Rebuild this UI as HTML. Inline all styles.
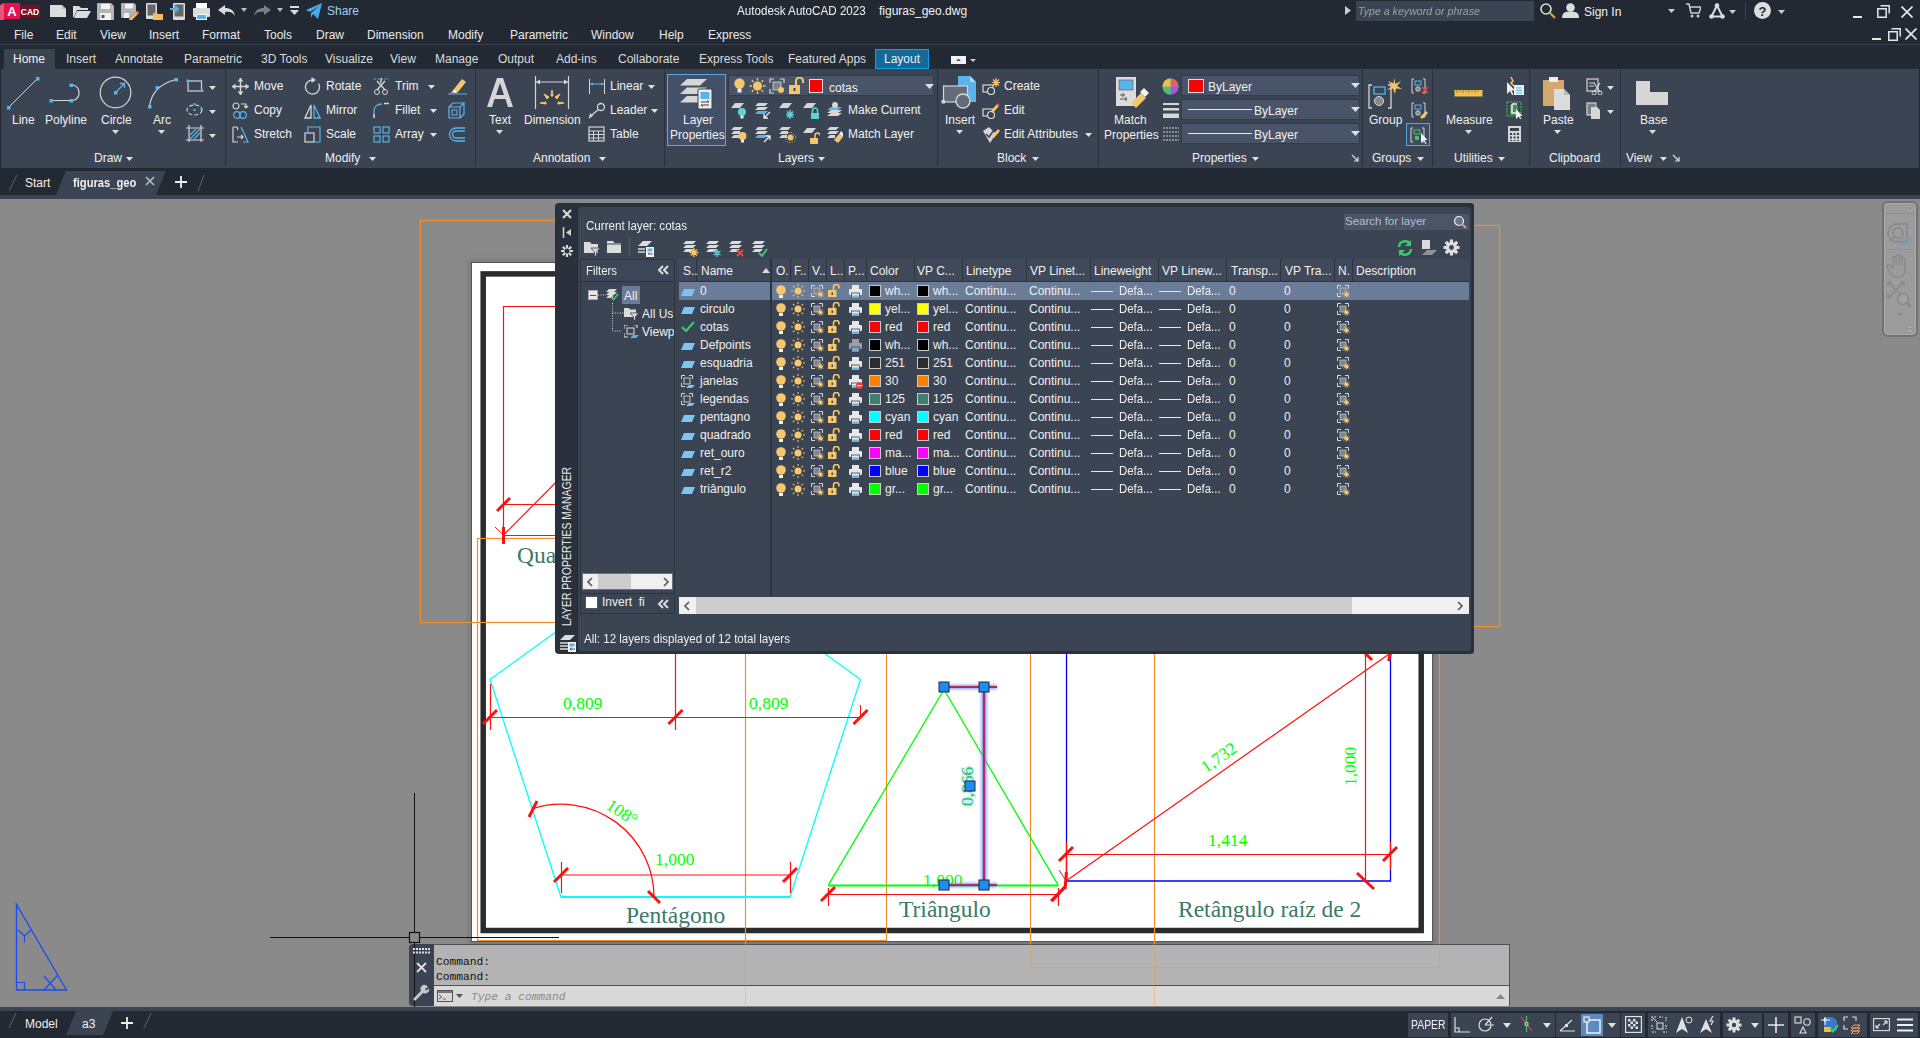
<!DOCTYPE html><html><head><meta charset="utf-8"><style>
*{margin:0;padding:0;box-sizing:border-box}
html,body{width:1920px;height:1038px;overflow:hidden;background:#222933;font-family:"Liberation Sans",sans-serif}
.t{position:absolute;white-space:nowrap;line-height:1;}
.r{position:absolute;}
</style></head><body>
<div class="r" style="left:0px;top:0px;width:1920px;height:44px;background:#222933;"></div>
<div class="r" style="left:0px;top:44px;width:1920px;height:1px;background:#3a4250;"></div>
<div class="r" style="left:0px;top:45px;width:1920px;height:24px;background:#222933;"></div>
<div class="r" style="left:1px;top:69px;width:1918px;height:99px;background:#3b4453;"></div>
<div class="r" style="left:0px;top:168px;width:1920px;height:27px;background:#222933;"></div>
<div class="r" style="left:0px;top:195px;width:1920px;height:4px;background:#3b4453;"></div>
<div class="r" style="left:0px;top:199px;width:1920px;height:808px;background:#8a8a8a;"></div>
<div class="r" style="left:0px;top:1007px;width:1920px;height:4px;background:#3b4453;"></div>
<div class="r" style="left:0px;top:1011px;width:1920px;height:27px;background:#222933;"></div>
<svg class="r" style="left:0px;top:3px;" width="40" height="18" viewBox="0 0 40 18"><polygon points="0,2 4,0 4,17 0,17" fill="#e8557a"/><rect x="4" y="0" width="16" height="16" fill="#e5124f"/><rect x="20" y="2" width="20" height="12" fill="#7b0b26"/><text x="12" y="13" font-family="Liberation Sans" font-weight="bold" font-size="13" fill="#fff" text-anchor="middle">A</text><text x="30" y="12" font-family="Liberation Sans" font-weight="bold" font-size="8.5" fill="#fff" text-anchor="middle">CAD</text></svg>
<svg class="r" style="left:50px;top:5px;" width="17" height="13" viewBox="0 0 17 13"><path d="M0,0 H12 L16,4 V12 H0 Z" fill="#dcdcdc"/><path d="M12,0 V4 H16" fill="#bbb"/></svg>
<svg class="r" style="left:73px;top:5px;" width="18" height="13" viewBox="0 0 18 13"><path d="M0,1 H6 L8,3 H15 V5 H4 L1,12 H0Z" fill="#dcdcdc"/><path d="M4,6 H18 L14,13 H1 Z" fill="#dcdcdc"/></svg>
<svg class="r" style="left:97px;top:3px;" width="17" height="17" viewBox="0 0 17 17"><path d="M1,0 H14 L17,3 V16 Q17,17 16,17 H1 Q0,17 0,16 V1 Q0,0 1,0Z" fill="#b4b4b4"/><rect x="4" y="1" width="9" height="5" fill="#f2f2f2"/><rect x="3" y="10" width="11" height="7" fill="#f2f2f2"/><rect x="4.5" y="12" width="3" height="3" fill="#555"/></svg>
<svg class="r" style="left:121px;top:3px;" width="18" height="17" viewBox="0 0 18 17"><path d="M1,0 H13 L15,2 V9 L9,15 H1 Q0,15 0,14 V1 Q0,0 1,0Z" fill="#b4b4b4"/><rect x="4" y="1" width="8" height="4.5" fill="#f2f2f2"/><rect x="3" y="10" width="5" height="5" fill="#f2f2f2"/><path d="M8,16 L16,8 L18,10 L10,18 H8Z" fill="#f0c060"/><path d="M15.5,8.5 L17.5,10.5" stroke="#e55" stroke-width="2.2"/></svg>
<svg class="r" style="left:146px;top:3px;" width="17" height="17" viewBox="0 0 17 17"><rect x="0" y="0" width="11" height="16" rx="1" fill="#dcdcdc"/><rect x="1.5" y="1.5" width="8" height="11" fill="#666"/><path d="M7,10 H11 L12,11 H17 V17 H7Z" fill="#f0c060"/></svg>
<svg class="r" style="left:170px;top:3px;" width="15" height="17" viewBox="0 0 15 17"><rect x="3" y="0" width="12" height="17" rx="1" fill="#dcdcdc"/><rect x="4.5" y="1.5" width="9" height="12" fill="#666"/><path d="M0,6 H8 M5,3 L8,6 L5,9" stroke="#4fb0f0" stroke-width="2" fill="none"/></svg>
<svg class="r" style="left:193px;top:3px;" width="17" height="17" viewBox="0 0 17 17"><rect x="3" y="0" width="11" height="5" fill="#fff"/><rect x="0" y="5" width="17" height="9" rx="1" fill="#dcdcdc"/><rect x="3" y="11" width="11" height="6" fill="#fff"/><rect x="4" y="12" width="9" height="4" fill="#5ab0f0"/></svg>
<svg class="r" style="left:218px;top:5px;" width="18" height="12" viewBox="0 0 18 12"><path d="M7,0 L0,5 L7,10 V7 C11,6 15,7 17,11 C16,5 12,3 7,3Z" fill="#dcdcdc"/></svg>
<svg class="r" style="left:241px;top:8px;" width="6" height="4" viewBox="0 0 6 4"><path d="M0,0 H6 L3,4Z" fill="#bbb"/></svg>
<svg class="r" style="left:253px;top:5px;" width="18" height="12" viewBox="0 0 18 12"><path d="M11,0 L18,5 L11,10 V7 C7,6 3,7 1,11 C2,5 6,3 11,3Z" fill="#777f8a"/></svg>
<svg class="r" style="left:277px;top:8px;" width="6" height="4" viewBox="0 0 6 4"><path d="M0,0 H6 L3,4Z" fill="#bbb"/></svg>
<svg class="r" style="left:290px;top:6px;" width="9" height="9" viewBox="0 0 9 9"><rect x="0" y="0" width="9" height="2" fill="#ddd"/><path d="M0,4 H9 L4.5,9Z" fill="#ddd"/></svg>
<svg class="r" style="left:306px;top:3px;" width="16" height="16" viewBox="0 0 16 16"><path d="M0,7 L16,0 L12,16 L7,11 L5,15 L5,10 L13,3 L4,9Z" fill="#4aa8e8"/></svg>
<div class="t" style="left:327px;top:5.14px;font-size:12px;color:#9fd2f8;">Share</div>
<div class="t" style="left:737px;top:5.34px;font-size:12px;color:#f2f2f2;transform:scaleX(0.97);transform-origin:0 0">Autodesk AutoCAD 2023</div>
<div class="t" style="left:879px;top:5.34px;font-size:12px;color:#f2f2f2;">figuras_geo.dwg</div>
<svg class="r" style="left:1345px;top:6px;" width="6" height="9" viewBox="0 0 6 9"><path d="M0,0 L6,4.5 L0,9Z" fill="#ccc"/></svg>
<div class="r" style="left:1356px;top:1px;width:178px;height:20px;background:#3b4453;"></div>
<div class="t" style="left:1358px;top:5.69px;font-size:11px;color:#9aa1ab;font-style:italic;transform:scaleX(0.965);transform-origin:0 0">Type a keyword or phrase</div>
<svg class="r" style="left:1540px;top:3px;" width="16" height="16" viewBox="0 0 16 16"><circle cx="6" cy="6" r="5" stroke="#ddd" stroke-width="1.6" fill="none"/><path d="M10,10 L15,15" stroke="#d8a050" stroke-width="2.2"/></svg>
<svg class="r" style="left:1562px;top:3px;" width="17" height="15" viewBox="0 0 17 15"><circle cx="8.5" cy="4.5" r="4.3" fill="#ddd"/><path d="M0,15 C0,9 4,8.5 8.5,8.5 C13,8.5 17,9 17,15Z" fill="#ddd"/></svg>
<div class="t" style="left:1584px;top:6.14px;font-size:12px;color:#f0f0f0;">Sign In</div>
<svg class="r" style="left:1668px;top:9px;" width="7" height="4" viewBox="0 0 7 4"><path d="M0,0 H7 L3.5,4Z" fill="#ccc"/></svg>
<svg class="r" style="left:1686px;top:3px;" width="15" height="15" viewBox="0 0 15 15"><path d="M0,1 H3 L5,10 H13 L15,4 H4" stroke="#ccc" stroke-width="1.5" fill="none"/><circle cx="6" cy="13" r="1.5" fill="#ccc"/><circle cx="12" cy="13" r="1.5" fill="#ccc"/></svg>
<svg class="r" style="left:1709px;top:3px;" width="16" height="16" viewBox="0 0 16 16"><path d="M8,2.5 L2.5,13.5 H13.5 Z" stroke="#ddd" stroke-width="2" fill="none"/><circle cx="8" cy="2.5" r="2.3" fill="#ddd"/><circle cx="2.5" cy="13.5" r="2.3" fill="#ddd"/><circle cx="13.5" cy="13.5" r="2.3" fill="#ddd"/></svg>
<svg class="r" style="left:1729px;top:10px;" width="7" height="4" viewBox="0 0 7 4"><path d="M0,0 H7 L3.5,4Z" fill="#ccc"/></svg>
<div class="r" style="left:1745px;top:2px;width:1px;height:18px;background:#3b4453;"></div>
<svg class="r" style="left:1754px;top:2px;" width="17" height="17" viewBox="0 0 17 17"><circle cx="8.5" cy="8.5" r="8.5" fill="#ddd"/><text x="8.5" y="13.5" font-family="Liberation Sans" font-weight="bold" font-size="13" fill="#222933" text-anchor="middle">?</text></svg>
<svg class="r" style="left:1778px;top:10px;" width="7" height="4" viewBox="0 0 7 4"><path d="M0,0 H7 L3.5,4Z" fill="#ccc"/></svg>
<div class="r" style="left:1853px;top:16px;width:9px;height:2px;background:#e6e6e6;"></div>
<svg class="r" style="left:1877px;top:5px;" width="13" height="13" viewBox="0 0 13 13"><path d="M3.5,0.8 H12.2 V8.5 M0.8,3.8 H9.2 V12.2 H0.8 Z" stroke="#e6e6e6" stroke-width="1.5" fill="none"/></svg>
<svg class="r" style="left:1901px;top:6px;" width="12" height="12" viewBox="0 0 12 12"><path d="M0.5,0.5 L11.5,11.5 M11.5,0.5 L0.5,11.5" stroke="#e6e6e6" stroke-width="1.7"/></svg>
<div class="t" style="left:14px;top:28.84px;font-size:12px;color:#e8e8e8;">File</div>
<div class="t" style="left:56px;top:28.84px;font-size:12px;color:#e8e8e8;">Edit</div>
<div class="t" style="left:100px;top:28.84px;font-size:12px;color:#e8e8e8;">View</div>
<div class="t" style="left:149px;top:28.84px;font-size:12px;color:#e8e8e8;">Insert</div>
<div class="t" style="left:202px;top:28.84px;font-size:12px;color:#e8e8e8;">Format</div>
<div class="t" style="left:264px;top:28.84px;font-size:12px;color:#e8e8e8;">Tools</div>
<div class="t" style="left:316px;top:28.84px;font-size:12px;color:#e8e8e8;">Draw</div>
<div class="t" style="left:367px;top:28.84px;font-size:12px;color:#e8e8e8;">Dimension</div>
<div class="t" style="left:448px;top:28.84px;font-size:12px;color:#e8e8e8;">Modify</div>
<div class="t" style="left:510px;top:28.84px;font-size:12px;color:#e8e8e8;">Parametric</div>
<div class="t" style="left:591px;top:28.84px;font-size:12px;color:#e8e8e8;">Window</div>
<div class="t" style="left:659px;top:28.84px;font-size:12px;color:#e8e8e8;">Help</div>
<div class="t" style="left:708px;top:28.84px;font-size:12px;color:#e8e8e8;">Express</div>
<div class="r" style="left:1872px;top:38px;width:9px;height:2px;background:#e6e6e6;"></div>
<svg class="r" style="left:1888px;top:28px;" width="13" height="13" viewBox="0 0 13 13"><path d="M3.5,0.8 H12.2 V8.5 M0.8,3.8 H9.2 V12.2 H0.8 Z" stroke="#e6e6e6" stroke-width="1.5" fill="none"/></svg>
<svg class="r" style="left:1905px;top:28px;" width="12" height="12" viewBox="0 0 12 12"><path d="M0.5,0.5 L11.5,11.5 M11.5,0.5 L0.5,11.5" stroke="#e6e6e6" stroke-width="1.7"/></svg>
<div class="r" style="left:4px;top:49px;width:51px;height:20px;background:#3b4453;"></div>
<div class="r" style="left:875px;top:49px;width:54px;height:20px;background:#136a98;border:1px solid #14a0e6"></div>
<div class="t" style="left:13px;top:52.84px;font-size:12px;color:#f0f0f0;">Home</div>
<div class="t" style="left:66px;top:52.84px;font-size:12px;color:#dcdcdc;">Insert</div>
<div class="t" style="left:115px;top:52.84px;font-size:12px;color:#dcdcdc;">Annotate</div>
<div class="t" style="left:184px;top:52.84px;font-size:12px;color:#dcdcdc;">Parametric</div>
<div class="t" style="left:261px;top:52.84px;font-size:12px;color:#dcdcdc;">3D Tools</div>
<div class="t" style="left:325px;top:52.84px;font-size:12px;color:#dcdcdc;">Visualize</div>
<div class="t" style="left:390px;top:52.84px;font-size:12px;color:#dcdcdc;">View</div>
<div class="t" style="left:435px;top:52.84px;font-size:12px;color:#dcdcdc;">Manage</div>
<div class="t" style="left:498px;top:52.84px;font-size:12px;color:#dcdcdc;">Output</div>
<div class="t" style="left:556px;top:52.84px;font-size:12px;color:#dcdcdc;">Add-ins</div>
<div class="t" style="left:618px;top:52.84px;font-size:12px;color:#dcdcdc;">Collaborate</div>
<div class="t" style="left:699px;top:52.84px;font-size:12px;color:#dcdcdc;">Express Tools</div>
<div class="t" style="left:788px;top:52.84px;font-size:12px;color:#dcdcdc;">Featured Apps</div>
<div class="t" style="left:884px;top:52.84px;font-size:12px;color:#f0f0f0;">Layout</div>
<svg class="r" style="left:951px;top:55px;" width="25" height="10" viewBox="0 0 25 10"><rect x="0" y="1" width="15" height="8" fill="#f2f2f2"/><path d="M5,6 L7.5,3.5 L10,6Z" fill="#555"/><path d="M19,4 H25 L22,7Z" fill="#ccc"/></svg>
<div class="r" style="left:225px;top:70px;width:1px;height:97px;background:#2a313c;"></div>
<div class="r" style="left:475px;top:70px;width:1px;height:97px;background:#2a313c;"></div>
<div class="r" style="left:664px;top:70px;width:1px;height:97px;background:#2a313c;"></div>
<div class="r" style="left:937px;top:70px;width:1px;height:97px;background:#2a313c;"></div>
<div class="r" style="left:1098px;top:70px;width:1px;height:97px;background:#2a313c;"></div>
<div class="r" style="left:1362px;top:70px;width:1px;height:97px;background:#2a313c;"></div>
<div class="r" style="left:1432px;top:70px;width:1px;height:97px;background:#2a313c;"></div>
<div class="r" style="left:1529px;top:70px;width:1px;height:97px;background:#2a313c;"></div>
<div class="r" style="left:1620px;top:70px;width:1px;height:97px;background:#2a313c;"></div>
<svg class="r" style="left:6px;top:76px;" width="34" height="34" viewBox="0 0 34 34"><path d="M2.5,31.5 L31.5,2.5" stroke="#d6d6d6" stroke-width="1"/><rect x="1" y="30" width="3.5" height="3.5" fill="#5ab4ea"/><rect x="30" y="1" width="3.5" height="3.5" fill="#5ab4ea"/></svg>
<div class="t" style="left:12px;top:113.84px;font-size:12px;color:#f0f0f0;">Line</div>
<svg class="r" style="left:48px;top:83px;" width="36" height="20" viewBox="0 0 36 20"><path d="M4,17.5 H22" stroke="#d6d6d6"/><path d="M25,2 A8,8 0 0 1 25,17.5" stroke="#d6d6d6" fill="none" stroke-width="1.2"/><rect x="1.5" y="16" width="3.5" height="3.5" fill="#5ab4ea"/><rect x="21.5" y="16" width="3.5" height="3.5" fill="#5ab4ea"/><rect x="21.5" y="0.5" width="3.5" height="3.5" fill="#5ab4ea"/></svg>
<div class="t" style="left:45px;top:113.84px;font-size:12px;color:#f0f0f0;">Polyline</div>
<svg class="r" style="left:99px;top:76px;" width="33" height="33" viewBox="0 0 33 33"><circle cx="16.5" cy="16.5" r="15.3" stroke="#d6d6d6" stroke-width="1.2" fill="none"/><rect x="15" y="15" width="3.5" height="3.5" fill="#5ab4ea"/><path d="M18,15 L25,8 M21,7.5 H25.5 V12" stroke="#5ab4ea" stroke-width="1.3" fill="none"/></svg>
<div class="t" style="left:101px;top:113.84px;font-size:12px;color:#f0f0f0;">Circle</div>
<svg class="r" style="left:112px;top:130px;" width="7" height="4" viewBox="0 0 7 4"><path d="M0,0 H7 L3.5,4Z" fill="#e0e0e0"/></svg>
<svg class="r" style="left:146px;top:76px;" width="34" height="34" viewBox="0 0 34 34"><path d="M3.5,30.5 C5,18 13,8 30,3.5" stroke="#d6d6d6" stroke-width="1.2" fill="none"/><rect x="2" y="29" width="3.5" height="3.5" fill="#5ab4ea"/><rect x="9.5" y="10" width="3.5" height="3.5" fill="#5ab4ea"/><rect x="28.5" y="2" width="3.5" height="3.5" fill="#5ab4ea"/></svg>
<div class="t" style="left:153px;top:113.84px;font-size:12px;color:#f0f0f0;">Arc</div>
<svg class="r" style="left:158px;top:130px;" width="7" height="4" viewBox="0 0 7 4"><path d="M0,0 H7 L3.5,4Z" fill="#e0e0e0"/></svg>
<svg class="r" style="left:186px;top:79px;" width="18" height="14" viewBox="0 0 18 14"><rect x="2" y="2" width="13.5" height="10" stroke="#d6d6d6" fill="none" stroke-width="1.2"/><rect x="0.5" y="0.5" width="2.5" height="2.5" fill="#5ab4ea"/><rect x="15" y="10.5" width="2.5" height="2.5" fill="#5ab4ea"/></svg>
<svg class="r" style="left:209px;top:86px;" width="7" height="4" viewBox="0 0 7 4"><path d="M0,0 H7 L3.5,4Z" fill="#e0e0e0"/></svg>
<svg class="r" style="left:186px;top:103px;" width="18" height="14" viewBox="0 0 18 14"><ellipse cx="8.5" cy="7" rx="7.5" ry="5" stroke="#d6d6d6" fill="none" stroke-width="1.1" stroke-dasharray="4,2"/><rect x="7.5" y="0" width="2" height="2" fill="#5ab4ea"/><rect x="7.5" y="6" width="2" height="2" fill="#5ab4ea"/><rect x="14.5" y="6" width="2" height="2" fill="#5ab4ea"/></svg>
<svg class="r" style="left:209px;top:110px;" width="7" height="4" viewBox="0 0 7 4"><path d="M0,0 H7 L3.5,4Z" fill="#e0e0e0"/></svg>
<svg class="r" style="left:186px;top:125px;" width="18" height="18" viewBox="0 0 18 18"><path d="M3,0 V17 M15,0 V17 M0,3 H18 M0,15 H18" stroke="#d6d6d6" stroke-width="1.2"/><path d="M4,14 L14,4 M4,10 L10,4 M8,14 L14,8" stroke="#5ab4ea" stroke-width="1.3"/></svg>
<svg class="r" style="left:209px;top:134px;" width="7" height="4" viewBox="0 0 7 4"><path d="M0,0 H7 L3.5,4Z" fill="#e0e0e0"/></svg>
<div class="t" style="left:94px;top:151.84px;font-size:12px;color:#f0f0f0;">Draw</div>
<svg class="r" style="left:126px;top:157px;" width="7" height="4" viewBox="0 0 7 4"><path d="M0,0 H7 L3.5,4Z" fill="#e0e0e0"/></svg>
<svg class="r" style="left:232px;top:78px;" width="17" height="17" viewBox="0 0 17 17"><path d="M8.5,0 V17 M0,8.5 H17" stroke="#d6d6d6" stroke-width="1.5"/><path d="M8.5,0 L5.5,3.5 H11.5Z M8.5,17 L5.5,13.5 H11.5Z M0,8.5 L3.5,5.5 V11.5Z M17,8.5 L13.5,5.5 V11.5Z" fill="#d6d6d6"/></svg>
<div class="t" style="left:254px;top:80.24px;font-size:12px;color:#f0f0f0;">Move</div>
<svg class="r" style="left:232px;top:102px;" width="17" height="17" viewBox="0 0 17 17"><circle cx="4" cy="4" r="3" stroke="#d6d6d6" fill="none" stroke-width="1.2"/><path d="M9,2 H14 V6 M12,4 L14,6 L16,4" stroke="#d6d6d6" fill="none" stroke-width="1.2"/><circle cx="5" cy="13" r="3.3" stroke="#5ab4ea" fill="none" stroke-width="1.2"/><circle cx="11" cy="13" r="3.3" stroke="#5ab4ea" fill="none" stroke-width="1.2"/></svg>
<div class="t" style="left:254px;top:104.24px;font-size:12px;color:#f0f0f0;">Copy</div>
<svg class="r" style="left:232px;top:126px;" width="17" height="17" viewBox="0 0 17 17"><path d="M1,1 V16 H6 M1,1 H5 L6,4" stroke="#d6d6d6" fill="none" stroke-width="1.2"/><path d="M9,1 L16,16 H11" stroke="#5ab4ea" fill="none" stroke-width="1.2"/><path d="M5,11 H11 M9,9 L11,11 L9,13" stroke="#d6d6d6" fill="none" stroke-width="1.2"/></svg>
<div class="t" style="left:254px;top:128.24px;font-size:12px;color:#f0f0f0;">Stretch</div>
<svg class="r" style="left:304px;top:77px;" width="17" height="18" viewBox="0 0 17 18"><path d="M8.5,3 A7,7 0 1 0 14.5,6.5" stroke="#d6d6d6" fill="none" stroke-width="1.3"/><path d="M7.5,0 L12,3 L7.5,6Z" fill="#d6d6d6"/></svg>
<div class="t" style="left:326px;top:80.24px;font-size:12px;color:#f0f0f0;">Rotate</div>
<svg class="r" style="left:304px;top:102px;" width="17" height="17" viewBox="0 0 17 17"><path d="M7,3 V16 H1Z" stroke="#d6d6d6" fill="none" stroke-width="1.3"/><path d="M10,3 V16 H16Z" stroke="#5ab4ea" fill="none" stroke-width="1.3"/></svg>
<div class="t" style="left:326px;top:104.24px;font-size:12px;color:#f0f0f0;">Mirror</div>
<svg class="r" style="left:304px;top:126px;" width="17" height="17" viewBox="0 0 17 17"><rect x="1" y="7" width="9" height="9" stroke="#d6d6d6" fill="none" stroke-width="1.2"/><path d="M4,7 V1 H16 V16 H10" stroke="#5ab4ea" fill="none" stroke-width="1.2"/></svg>
<div class="t" style="left:326px;top:128.24px;font-size:12px;color:#f0f0f0;">Scale</div>
<svg class="r" style="left:373px;top:78px;" width="17" height="17" viewBox="0 0 17 17"><path d="M1,1 H16" stroke="#5ab4ea" stroke-dasharray="2,1.5" stroke-width="1.2"/><path d="M4,3 L12,12 M12,3 L4,12" stroke="#d6d6d6" stroke-width="1.3"/><circle cx="4" cy="14" r="2.5" stroke="#d6d6d6" fill="none"/><circle cx="12" cy="14" r="2.5" stroke="#d6d6d6" fill="none"/><path d="M8,0 V5" stroke="#d6d6d6" stroke-width="1.4"/></svg>
<div class="t" style="left:395px;top:80.24px;font-size:12px;color:#f0f0f0;">Trim</div>
<svg class="r" style="left:428px;top:85px;" width="7" height="4" viewBox="0 0 7 4"><path d="M0,0 H7 L3.5,4Z" fill="#e0e0e0"/></svg>
<svg class="r" style="left:373px;top:102px;" width="17" height="17" viewBox="0 0 17 17"><path d="M1,16 V9 C1,5 4,2 9,2" stroke="#5ab4ea" fill="none" stroke-width="1.3"/><path d="M11,1.5 H16 M1,12 V16" stroke="#d6d6d6" stroke-width="1.3"/></svg>
<div class="t" style="left:395px;top:104.24px;font-size:12px;color:#f0f0f0;">Fillet</div>
<svg class="r" style="left:430px;top:109px;" width="7" height="4" viewBox="0 0 7 4"><path d="M0,0 H7 L3.5,4Z" fill="#e0e0e0"/></svg>
<svg class="r" style="left:373px;top:126px;" width="17" height="17" viewBox="0 0 17 17"><rect x="1" y="1" width="6" height="6" stroke="#5ab4ea" fill="none" stroke-width="1.2"/><rect x="10" y="1" width="6" height="6" stroke="#5ab4ea" fill="none" stroke-width="1.2"/><rect x="1" y="10" width="6" height="6" stroke="#5ab4ea" fill="none" stroke-width="1.2"/><rect x="10" y="10" width="6" height="6" stroke="#5ab4ea" fill="none" stroke-width="1.2"/></svg>
<div class="t" style="left:395px;top:128.24px;font-size:12px;color:#f0f0f0;">Array</div>
<svg class="r" style="left:430px;top:133px;" width="7" height="4" viewBox="0 0 7 4"><path d="M0,0 H7 L3.5,4Z" fill="#e0e0e0"/></svg>
<svg class="r" style="left:448px;top:77px;" width="19" height="18" viewBox="0 0 19 18"><path d="M6,12 L14,2 L18,5 L10,15Z" fill="#f5c66a"/><path d="M6,12 L10,15 L8,16 H3Z" fill="#f0f0f0"/><path d="M0,17 H19" stroke="#5ab4ea" stroke-width="1"/><path d="M2,16 H6" stroke="#e55" stroke-width="1.5"/></svg>
<svg class="r" style="left:448px;top:102px;" width="18" height="17" viewBox="0 0 18 17"><path d="M1,5 H12 V16 H1Z M1,5 L5,1 H16 L12,5 M16,1 V12 L12,16" stroke="#5ab4ea" fill="none" stroke-width="1.2"/><rect x="4" y="8" width="5" height="5" stroke="#5ab4ea" fill="none"/></svg>
<svg class="r" style="left:448px;top:126px;" width="18" height="17" viewBox="0 0 18 17"><path d="M17,2 H8 A6.5,6.5 0 0 0 8,15 H17 M17,5 H8 A3.5,3.5 0 0 0 8,12 H17" stroke="#5ab4ea" fill="none" stroke-width="1.3"/></svg>
<div class="t" style="left:325px;top:151.84px;font-size:12px;color:#f0f0f0;">Modify</div>
<svg class="r" style="left:369px;top:157px;" width="7" height="4" viewBox="0 0 7 4"><path d="M0,0 H7 L3.5,4Z" fill="#e0e0e0"/></svg>
<svg class="r" style="left:486px;top:77px;" width="28" height="30" viewBox="0 0 28 30"><path d="M1,30 L11,1 H17 L27,30 H22 L19.5,22 H8.5 L6,30Z M10,18 H18 L14,6Z" fill="#d6d6d6"/></svg>
<div class="t" style="left:489px;top:113.84px;font-size:12px;color:#f0f0f0;">Text</div>
<svg class="r" style="left:496px;top:130px;" width="7" height="4" viewBox="0 0 7 4"><path d="M0,0 H7 L3.5,4Z" fill="#e0e0e0"/></svg>
<svg class="r" style="left:534px;top:76px;" width="36" height="34" viewBox="0 0 36 34"><path d="M1.5,0 V33 M34.5,0 V33 M2,6 H34" stroke="#d6d6d6" stroke-width="1.2" fill="none"/><path d="M2,6 L6,3.5 V8.5Z M34,6 L30,3.5 V8.5Z" fill="#d6d6d6"/><path d="M18,14 L17,20 H19Z M10,18 L13,23 L15,21Z M26,18 L23,23 L21,21Z M6,27 L12,26 V28Z M30,27 L24,26 V28Z" fill="#f5c66a" stroke="#f5c66a" stroke-width="1"/></svg>
<div class="t" style="left:524px;top:113.84px;font-size:12px;color:#f0f0f0;">Dimension</div>
<svg class="r" style="left:588px;top:78px;" width="18" height="17" viewBox="0 0 18 17"><path d="M1.5,1 V16 M16.5,1 V16" stroke="#d6d6d6" stroke-width="1"/><path d="M2,6 H16" stroke="#5ab4ea" stroke-width="1"/><path d="M2,6 L5,4.5 V7.5Z M16,6 L13,4.5 V7.5Z" fill="#5ab4ea"/></svg>
<div class="t" style="left:610px;top:80.24px;font-size:12px;color:#f0f0f0;">Linear</div>
<svg class="r" style="left:648px;top:85px;" width="7" height="4" viewBox="0 0 7 4"><path d="M0,0 H7 L3.5,4Z" fill="#e0e0e0"/></svg>
<svg class="r" style="left:588px;top:102px;" width="18" height="17" viewBox="0 0 18 17"><circle cx="13" cy="5" r="3.5" stroke="#d6d6d6" fill="none" stroke-width="1.3"/><path d="M10.5,7.5 L5,12 L1,16" stroke="#d6d6d6" fill="none" stroke-width="1.3"/><path d="M1,16 L2,11 L5,14Z" fill="#d6d6d6"/></svg>
<div class="t" style="left:610px;top:104.24px;font-size:12px;color:#f0f0f0;">Leader</div>
<svg class="r" style="left:651px;top:109px;" width="7" height="4" viewBox="0 0 7 4"><path d="M0,0 H7 L3.5,4Z" fill="#e0e0e0"/></svg>
<svg class="r" style="left:588px;top:126px;" width="18" height="17" viewBox="0 0 18 17"><rect x="1" y="1" width="15" height="14" stroke="#d6d6d6" fill="none" stroke-width="1.2"/><path d="M1,5 H16 M1,8.5 H16 M1,12 H16 M5.5,5 V15 M10.5,5 V15" stroke="#d6d6d6" stroke-width="1"/></svg>
<div class="t" style="left:610px;top:128.24px;font-size:12px;color:#f0f0f0;">Table</div>
<div class="t" style="left:533px;top:151.84px;font-size:12px;color:#f0f0f0;">Annotation</div>
<svg class="r" style="left:599px;top:157px;" width="7" height="4" viewBox="0 0 7 4"><path d="M0,0 H7 L3.5,4Z" fill="#e0e0e0"/></svg>
<div class="r" style="left:667px;top:74px;width:59px;height:72px;background:#435068;border:1px solid #56a8e4"></div>
<svg class="r" style="left:679px;top:76px;" width="36" height="34" viewBox="0 0 36 34"><path d="M1,9.5 L8,3 H28 L21,9.5Z" fill="#d6d6d6"/><path d="M1,18 L8,11.5 H28 L21,18Z" fill="#d6d6d6"/><path d="M1,26.5 L8,20 H28 L21,26.5Z" fill="#d6d6d6"/><rect x="19" y="13" width="14" height="20" rx="1" fill="#eeeeee" stroke="#3b4453" stroke-width="1"/><rect x="21.5" y="16" width="9" height="7" fill="#5ab4ea"/><path d="M22,26 H30 M28,24.5 L30,26 M22,29 H30 M22,29 L24,30.5" stroke="#444" stroke-width="1" fill="none"/></svg>
<div class="t" style="left:683px;top:113.84px;font-size:12px;color:#f0f0f0;">Layer</div>
<div class="t" style="left:670px;top:128.84px;font-size:12px;color:#f0f0f0;">Properties</div>
<div class="r" style="left:728px;top:75px;width:206px;height:21px;background:#4a5468;border:1px solid #333b48"></div>
<svg class="r" style="left:734px;top:78px;" width="11" height="16" viewBox="0 0 11 16"><circle cx="5.5" cy="5.5" r="5.2" fill="#f5c66a"/><rect x="3.5" y="10.5" width="4" height="4" fill="#eee"/></svg>
<svg class="r" style="left:749px;top:78px;" width="17" height="16" viewBox="0 0 17 16"><circle cx="8.5" cy="8" r="4.5" fill="#f5c66a"/><path d="M8.5,0 V2.5 M8.5,13.5 V16 M0.5,8 H3 M14,8 H16.5 M2.8,2.3 L4.5,4 M12.5,12 L14.2,13.7 M14.2,2.3 L12.5,4 M4.5,12 L2.8,13.7" stroke="#f5c66a" stroke-width="1.3"/></svg>
<svg class="r" style="left:769px;top:78px;" width="17" height="16" viewBox="0 0 17 16"><path d="M1,5 V1 H5 M11,1 H15 V5 M1,11 V15 H5" stroke="#d6d6d6" stroke-width="1.2" fill="none"/><rect x="4" y="4" width="8" height="8" fill="#7a8290" stroke="#d6d6d6" stroke-width="0.8"/><circle cx="12" cy="12" r="3" fill="#f5c66a"/></svg>
<svg class="r" style="left:789px;top:77px;" width="15" height="17" viewBox="0 0 15 17"><rect x="0" y="8" width="11" height="9" fill="#f5c66a"/><path d="M7,8 V4 A3.5,3.5 0 0 1 14,4 V6" stroke="#f5c66a" stroke-width="2" fill="none"/><rect x="4.5" y="11" width="2" height="3" fill="#3b4453"/></svg>
<div class="r" style="left:809px;top:79px;width:14px;height:14px;background:#ff0000;border:1px solid #ddd"></div>
<div class="t" style="left:829px;top:81.84px;font-size:12px;color:#f0f0f0;">cotas</div>
<svg class="r" style="left:925px;top:84px;" width="9" height="5" viewBox="0 0 9 5"><path d="M0,0 H9 L4.5,5Z" fill="#e0e0e0"/></svg>
<svg class="r" style="left:730px;top:102px;" width="18" height="17" viewBox="0 0 18 17"><path d="M1,6 L5,1 H14 L10,6Z" fill="#d6d6d6"/><circle cx="12" cy="10" r="4" fill="#5fd0d8"/><rect x="10.5" y="13.5" width="3" height="3" fill="#eee"/></svg>
<svg class="r" style="left:754px;top:102px;" width="18" height="17" viewBox="0 0 18 17"><path d="M1,4 L4,1 H14 L11,4Z M1,8 L4,5 H14 L11,8Z" fill="#d6d6d6"/><path d="M1,12 L4,9 H14 L11,12Z" fill="#5ab4ea"/><path d="M16,10 L10,16 M10,12 V16 H14" stroke="#eee" stroke-width="1.3" fill="none"/></svg>
<svg class="r" style="left:778px;top:102px;" width="18" height="17" viewBox="0 0 18 17"><path d="M1,6 L5,1 H14 L10,6Z" fill="#d6d6d6"/><path d="M12,8 V17 M8,12.5 H16 M9,9.5 L15,15.5 M15,9.5 L9,15.5" stroke="#5fd0d8" stroke-width="1.5"/></svg>
<svg class="r" style="left:802px;top:102px;" width="18" height="17" viewBox="0 0 18 17"><path d="M1,6 L5,1 H14 L10,6Z" fill="#d6d6d6"/><rect x="9" y="11" width="8" height="6" fill="#5fd0d8"/><path d="M10.5,11 V8.5 A2.5,2.5 0 0 1 15.5,8.5 V11" stroke="#5fd0d8" stroke-width="1.5" fill="none"/></svg>
<svg class="r" style="left:826px;top:101px;" width="17" height="18" viewBox="0 0 17 18"><path d="M1,12 L5,9 H16 L12,12Z M1,15 L5,12 H16 L12,15Z" fill="#d6d6d6"/><path d="M1,9 L5,6 H16 L12,9Z" fill="#5ab4ea"/><circle cx="9" cy="4" r="3" fill="#d6d6d6"/></svg>
<div class="t" style="left:848px;top:104.24px;font-size:12px;color:#f0f0f0;">Make Current</div>
<svg class="r" style="left:730px;top:126px;" width="18" height="17" viewBox="0 0 18 17"><path d="M1,4 L4,1 H13 L10,4Z M1,8 L4,5 H10 V8Z M1,12 L4,9 H9 V12Z" fill="#d6d6d6"/><circle cx="12.5" cy="10" r="4" fill="#f5c66a"/><rect x="11" y="13.5" width="3" height="3" fill="#eee"/></svg>
<svg class="r" style="left:754px;top:126px;" width="18" height="17" viewBox="0 0 18 17"><path d="M1,4 L4,1 H14 L11,4Z M1,8 L4,5 H14 L11,8Z" fill="#d6d6d6"/><path d="M1,12 L4,9 H14 L11,12Z" fill="#5ab4ea"/><path d="M10,16 L16,10 M12,10 H16 V14" stroke="#eee" stroke-width="1.3" fill="none"/></svg>
<svg class="r" style="left:778px;top:126px;" width="18" height="17" viewBox="0 0 18 17"><path d="M1,4 L4,1 H13 L10,4Z M1,8 L4,5 H10 V8Z M1,12 L4,9 H9 V12Z" fill="#d6d6d6"/><circle cx="12.5" cy="11.5" r="3" fill="#f5c66a"/><circle cx="12.5" cy="11.5" r="5" stroke="#f5c66a" stroke-dasharray="1,1.6" fill="none"/></svg>
<svg class="r" style="left:802px;top:127px;" width="18" height="17" viewBox="0 0 18 17"><path d="M1,6 L5,1 H14 L10,6Z" fill="#d6d6d6"/><rect x="8" y="11" width="8" height="6" fill="#f5c66a"/><path d="M13,11 V8.5 A2.5,2.5 0 0 1 18,8.5" stroke="#f5c66a" stroke-width="1.5" fill="none"/></svg>
<svg class="r" style="left:826px;top:126px;" width="17" height="18" viewBox="0 0 17 18"><path d="M1,4 L4,1 H13 L10,4Z M1,8 L4,5 H13 L10,8Z M1,12 L4,9 H9 V12Z" fill="#d6d6d6"/><path d="M8,14 L13,8 L17,11 L12,17Z" fill="#f5c66a"/><path d="M13,8 L15,5 L18,8 L17,11" fill="#eee"/></svg>
<div class="t" style="left:848px;top:128.24px;font-size:12px;color:#f0f0f0;">Match Layer</div>
<div class="t" style="left:778px;top:151.84px;font-size:12px;color:#f0f0f0;">Layers</div>
<svg class="r" style="left:818px;top:157px;" width="7" height="4" viewBox="0 0 7 4"><path d="M0,0 H7 L3.5,4Z" fill="#e0e0e0"/></svg>
<svg class="r" style="left:941px;top:75px;" width="36" height="36" viewBox="0 0 36 36"><path d="M17,1 H29 L35,7 V27 H17Z" fill="#5ab4ea"/><path d="M29,1 V7 H35" fill="#a8d8f8"/><rect x="2.5" y="11" width="24" height="16" fill="#646c7a" stroke="#d6d6d6" stroke-width="1.2"/><circle cx="22" cy="26" r="7" fill="#646c7a" stroke="#d6d6d6" stroke-width="1.3"/><rect x="0.5" y="25" width="3.5" height="3.5" fill="#d6d6d6"/></svg>
<div class="t" style="left:945px;top:113.84px;font-size:12px;color:#f0f0f0;">Insert</div>
<svg class="r" style="left:956px;top:130px;" width="7" height="4" viewBox="0 0 7 4"><path d="M0,0 H7 L3.5,4Z" fill="#e0e0e0"/></svg>
<svg class="r" style="left:982px;top:78px;" width="18" height="17" viewBox="0 0 18 17"><rect x="1" y="7" width="10" height="7" stroke="#d6d6d6" fill="none" stroke-width="1.2"/><circle cx="9" cy="13" r="3.5" stroke="#d6d6d6" fill="#3b4453" stroke-width="1.2"/><path d="M14,0 V9 M10,4.5 H18 M11,1.5 L17,7.5 M17,1.5 L11,7.5" stroke="#f5c66a" stroke-width="1.2"/></svg>
<div class="t" style="left:1004px;top:80.24px;font-size:12px;color:#f0f0f0;">Create</div>
<svg class="r" style="left:982px;top:102px;" width="18" height="17" viewBox="0 0 18 17"><rect x="1" y="7" width="10" height="7" stroke="#d6d6d6" fill="none" stroke-width="1.2"/><circle cx="9" cy="13" r="3.5" stroke="#d6d6d6" fill="#3b4453" stroke-width="1.2"/><path d="M9,9 L15,2 L17,4 L11,11Z" fill="#f5c66a"/><path d="M15,2 L17,4" stroke="#e55" stroke-width="2"/></svg>
<div class="t" style="left:1004px;top:104.24px;font-size:12px;color:#f0f0f0;">Edit</div>
<svg class="r" style="left:982px;top:126px;" width="18" height="18" viewBox="0 0 18 18"><path d="M1,5 L7,1 L14,8 L8,17Z" fill="#d6d6d6"/><path d="M4,8 L7,11 L12,4" stroke="#3b4453" stroke-width="1.5" fill="none"/><path d="M10,10 L16,3 L18,5 L12,12Z" fill="#f5c66a"/></svg>
<div class="t" style="left:1004px;top:128.24px;font-size:12px;color:#f0f0f0;">Edit Attributes</div>
<svg class="r" style="left:1085px;top:133px;" width="7" height="4" viewBox="0 0 7 4"><path d="M0,0 H7 L3.5,4Z" fill="#e0e0e0"/></svg>
<div class="t" style="left:997px;top:151.84px;font-size:12px;color:#f0f0f0;">Block</div>
<svg class="r" style="left:1032px;top:157px;" width="7" height="4" viewBox="0 0 7 4"><path d="M0,0 H7 L3.5,4Z" fill="#e0e0e0"/></svg>
<svg class="r" style="left:1115px;top:77px;" width="34" height="32" viewBox="0 0 34 32"><rect x="1" y="0" width="20" height="29" fill="#dcdcdc"/><rect x="4" y="3" width="14" height="10" fill="#5ab4ea" stroke="#555" stroke-width="0.6"/><path d="M5,18 H10 M5,22 H12 M8,16 V20 M11,20 V24" stroke="#555" stroke-width="1"/><path d="M16,26 L26,16 L31,21 L21,31Z" fill="#f5c66a"/><path d="M25,15 L29,11 L34,16 L30,20Z" fill="#f4f4f4"/></svg>
<div class="t" style="left:1114px;top:113.84px;font-size:12px;color:#f0f0f0;">Match</div>
<div class="t" style="left:1104px;top:128.84px;font-size:12px;color:#f0f0f0;">Properties</div>
<svg class="r" style="left:1162px;top:78px;" width="18" height="17" viewBox="0 0 18 17"><circle cx="8.5" cy="8.5" r="8" fill="#4ab8e8"/><path d="M8.5,8.5 V0.5 A8,8 0 0 1 16.5,8.5Z" fill="#f06050"/><path d="M8.5,8.5 H16.5 A8,8 0 0 1 8.5,16.5Z" fill="#b050e0"/><path d="M8.5,8.5 V16.5 A8,8 0 0 1 0.5,8.5Z" fill="#50c060"/><path d="M8.5,8.5 H0.5 A8,8 0 0 1 8.5,0.5Z" fill="#f0c040"/></svg>
<svg class="r" style="left:1162px;top:102px;" width="18" height="17" viewBox="0 0 18 17"><rect x="1" y="1" width="16" height="2" fill="#d6d6d6"/><rect x="1" y="6" width="16" height="2.5" fill="#d6d6d6"/><rect x="1" y="11.5" width="16" height="4.5" fill="#d6d6d6"/></svg>
<svg class="r" style="left:1162px;top:126px;" width="18" height="17" viewBox="0 0 18 17"><path d="M1,2 H17 M1,6 H17 M1,10 H17 M1,14 H17" stroke="#d6d6d6" stroke-width="1.2" stroke-dasharray="2,1"/></svg>
<div class="r" style="left:1181px;top:75px;width:179px;height:21px;background:#4a5468;border:1px solid #333b48"></div>
<svg class="r" style="left:1351px;top:83px;" width="9" height="5" viewBox="0 0 9 5"><path d="M0,0 H9 L4.5,5Z" fill="#e0e0e0"/></svg>
<div class="r" style="left:1181px;top:99px;width:179px;height:21px;background:#4a5468;border:1px solid #333b48"></div>
<svg class="r" style="left:1351px;top:107px;" width="9" height="5" viewBox="0 0 9 5"><path d="M0,0 H9 L4.5,5Z" fill="#e0e0e0"/></svg>
<div class="r" style="left:1181px;top:123px;width:179px;height:21px;background:#4a5468;border:1px solid #333b48"></div>
<svg class="r" style="left:1351px;top:131px;" width="9" height="5" viewBox="0 0 9 5"><path d="M0,0 H9 L4.5,5Z" fill="#e0e0e0"/></svg>
<div class="r" style="left:1188px;top:79px;width:16px;height:14px;background:#ff0000;border:1px solid #ddd"></div>
<div class="t" style="left:1208px;top:80.84px;font-size:12px;color:#f0f0f0;">ByLayer</div>
<div class="r" style="left:1188px;top:109px;width:64px;height:1px;background:#e8e8e8;"></div>
<div class="t" style="left:1254px;top:104.84px;font-size:12px;color:#f0f0f0;">ByLayer</div>
<div class="r" style="left:1188px;top:133px;width:64px;height:1px;background:#e8e8e8;"></div>
<div class="t" style="left:1254px;top:128.84px;font-size:12px;color:#f0f0f0;">ByLayer</div>
<div class="t" style="left:1192px;top:151.84px;font-size:12px;color:#f0f0f0;">Properties</div>
<svg class="r" style="left:1252px;top:157px;" width="7" height="4" viewBox="0 0 7 4"><path d="M0,0 H7 L3.5,4Z" fill="#e0e0e0"/></svg>
<svg class="r" style="left:1351px;top:154px;" width="8" height="8" viewBox="0 0 8 8"><path d="M1,1 L7,7 M3,7 H7 V3" stroke="#ddd" stroke-width="1.2" fill="none"/></svg>
<svg class="r" style="left:1368px;top:77px;" width="34" height="33" viewBox="0 0 34 33"><path d="M4,8 H1 V31 H4 M20,8 H23 V31 H20" stroke="#d6d6d6" stroke-width="1.3" fill="none"/><rect x="6" y="10" width="11" height="7" stroke="#5ab4ea" fill="none" stroke-width="1.3"/><circle cx="11" cy="24" r="4.5" fill="#888" stroke="#d6d6d6" stroke-width="1"/><path d="M26,1 L27.5,7 L33,4 L29,9 L34,12 L28,11.5 L27,17 L25,11.5 L19,13 L24,9 L20,4 L25.5,6.5Z" fill="#f5c66a"/></svg>
<div class="t" style="left:1369px;top:113.84px;font-size:12px;color:#f0f0f0;">Group</div>
<svg class="r" style="left:1411px;top:78px;" width="18" height="17" viewBox="0 0 18 17"><path d="M3,1 H1 V15 H3 M12,1 H14 V15 H12" stroke="#d6d6d6" fill="none"/><rect x="4" y="3" width="6" height="4" stroke="#5ab4ea" fill="none"/><circle cx="7" cy="11" r="2.3" fill="#888" stroke="#d6d6d6" stroke-width="0.8"/><path d="M11,9 L17,15 M17,9 L11,15" stroke="#f04040" stroke-width="1.6"/></svg>
<svg class="r" style="left:1411px;top:102px;" width="18" height="17" viewBox="0 0 18 17"><path d="M3,1 H1 V15 H3 M12,1 H14 V15 H12" stroke="#d6d6d6" fill="none"/><rect x="4" y="3" width="6" height="4" stroke="#5ab4ea" fill="none"/><circle cx="7" cy="11" r="2.3" fill="#888" stroke="#d6d6d6" stroke-width="0.8"/><path d="M9,15 L15,9 L17,11 L11,17Z" fill="#f5c66a"/></svg>
<div class="r" style="left:1406px;top:123px;width:24px;height:23px;background:#3e4c62;border:1px solid #56a8e4"></div>
<svg class="r" style="left:1410px;top:127px;" width="18" height="17" viewBox="0 0 18 17"><path d="M3,1 H1 V15 H3 M12,1 H14 V15 H12" stroke="#d6d6d6" fill="none"/><rect x="4" y="3" width="6" height="4" stroke="#50c060" fill="none"/><circle cx="7" cy="11" r="2.3" fill="#50c060"/><path d="M11,6 V16 L13.5,13.5 L15.5,17 L16.5,16.5 L14.5,13 H17.5Z" fill="#f4f4f4"/></svg>
<div class="t" style="left:1372px;top:151.84px;font-size:12px;color:#f0f0f0;">Groups</div>
<svg class="r" style="left:1417px;top:157px;" width="7" height="4" viewBox="0 0 7 4"><path d="M0,0 H7 L3.5,4Z" fill="#e0e0e0"/></svg>
<svg class="r" style="left:1454px;top:88px;" width="30" height="10" viewBox="0 0 30 10"><rect x="0.5" y="2" width="28" height="6.5" fill="#f0c050"/><path d="M3,2 V5 M6,2 V4 M9,2 V5 M12,2 V4 M15,2 V5 M18,2 V4 M21,2 V5 M24,2 V4" stroke="#8a6a20" stroke-width="0.8"/></svg>
<div class="t" style="left:1446px;top:113.84px;font-size:12px;color:#f0f0f0;">Measure</div>
<svg class="r" style="left:1465px;top:130px;" width="7" height="4" viewBox="0 0 7 4"><path d="M0,0 H7 L3.5,4Z" fill="#e0e0e0"/></svg>
<svg class="r" style="left:1506px;top:77px;" width="18" height="18" viewBox="0 0 18 18"><path d="M1,5 V17 L4,14 L6,18 L7.5,17.5 L5.5,13.5 H9Z" fill="#eee"/><rect x="8" y="8" width="10" height="10" fill="#eee"/><path d="M10,11 H16 M10,13.5 H16 M10,16 H16" stroke="#5ab4ea" stroke-width="1.2"/><path d="M5,0 L7,4 L5,6 L8,9" stroke="#f5c66a" stroke-width="1.5" fill="none"/></svg>
<svg class="r" style="left:1506px;top:101px;" width="18" height="18" viewBox="0 0 18 18"><rect x="1" y="1" width="14" height="14" stroke="#50c060" stroke-dasharray="2,1" fill="none"/><rect x="4" y="4" width="8" height="10" fill="#50c060" opacity="0.6"/><path d="M6,3 H11 M6,3 V12 H12" stroke="#eee" stroke-width="1.5" fill="none"/><path d="M10,8 V18 L12.5,15.5 L14.5,18.5 L15.5,18 L13.5,15 H16.5Z" fill="#f4f4f4"/></svg>
<svg class="r" style="left:1507px;top:125px;" width="15" height="18" viewBox="0 0 15 18"><rect x="1" y="1" width="13" height="16" fill="#d6d6d6"/><rect x="3" y="3" width="9" height="3" fill="#3b4453"/><path d="M3,8 h2 v2 h-2z M6.5,8 h2 v2 h-2z M10,8 h2 v2 h-2z M3,11.5 h2 v2 h-2z M6.5,11.5 h2 v2 h-2z M10,11.5 h2 v2 h-2z M3,15 h2 v1 h-2z M6.5,15 h2 v1 h-2z M10,15 h2 v1 h-2z" fill="#3b4453"/></svg>
<div class="t" style="left:1454px;top:151.84px;font-size:12px;color:#f0f0f0;">Utilities</div>
<svg class="r" style="left:1498px;top:157px;" width="7" height="4" viewBox="0 0 7 4"><path d="M0,0 H7 L3.5,4Z" fill="#e0e0e0"/></svg>
<svg class="r" style="left:1542px;top:76px;" width="30" height="34" viewBox="0 0 30 34"><rect x="1" y="4" width="21" height="26" fill="#d4a86a"/><rect x="7" y="1" width="9" height="5" fill="#eee"/><path d="M12,13 H22 L28,19 V34 H12Z" fill="#dcdcdc"/><path d="M22,13 V19 H28" fill="#bbb"/></svg>
<div class="t" style="left:1543px;top:113.84px;font-size:12px;color:#f0f0f0;">Paste</div>
<svg class="r" style="left:1554px;top:130px;" width="7" height="4" viewBox="0 0 7 4"><path d="M0,0 H7 L3.5,4Z" fill="#e0e0e0"/></svg>
<svg class="r" style="left:1586px;top:78px;" width="18" height="17" viewBox="0 0 18 17"><rect x="1" y="1" width="11" height="12" stroke="#d6d6d6" fill="none" stroke-width="1.2"/><path d="M3,5 H9 M3,8 H8" stroke="#d6d6d6"/><path d="M8,5 L14,14 M14,5 L8,14" stroke="#d6d6d6" stroke-width="1.2"/><circle cx="8" cy="15" r="2" stroke="#d6d6d6" fill="none"/><circle cx="14" cy="15" r="2" stroke="#d6d6d6" fill="none"/></svg>
<svg class="r" style="left:1607px;top:86px;" width="7" height="4" viewBox="0 0 7 4"><path d="M0,0 H7 L3.5,4Z" fill="#e0e0e0"/></svg>
<svg class="r" style="left:1586px;top:102px;" width="18" height="17" viewBox="0 0 18 17"><path d="M1,1 H9 V13 H1Z" fill="#9aa" opacity="0.6"/><rect x="1" y="1" width="9" height="12" stroke="#d6d6d6" fill="none" stroke-width="1.2"/><path d="M5,5 H11 L14,8 V17 H5Z" fill="#d6d6d6"/></svg>
<svg class="r" style="left:1607px;top:110px;" width="7" height="4" viewBox="0 0 7 4"><path d="M0,0 H7 L3.5,4Z" fill="#e0e0e0"/></svg>
<div class="t" style="left:1549px;top:151.84px;font-size:12px;color:#f0f0f0;">Clipboard</div>
<svg class="r" style="left:1635px;top:81px;" width="34" height="25" viewBox="0 0 34 25"><path d="M1,0 H15 V11 H33 V24 H1Z" fill="#d6d6d6"/></svg>
<div class="t" style="left:1640px;top:113.84px;font-size:12px;color:#f0f0f0;">Base</div>
<svg class="r" style="left:1649px;top:130px;" width="7" height="4" viewBox="0 0 7 4"><path d="M0,0 H7 L3.5,4Z" fill="#e0e0e0"/></svg>
<div class="t" style="left:1626px;top:151.84px;font-size:12px;color:#f0f0f0;">View</div>
<svg class="r" style="left:1660px;top:157px;" width="7" height="4" viewBox="0 0 7 4"><path d="M0,0 H7 L3.5,4Z" fill="#e0e0e0"/></svg>
<svg class="r" style="left:1672px;top:154px;" width="8" height="8" viewBox="0 0 8 8"><path d="M1,1 L7,7 M3,7 H7 V3" stroke="#ddd" stroke-width="1.2" fill="none"/></svg>
<svg class="r" style="left:0px;top:168px;" width="220" height="27" viewBox="0 0 220 27"><path d="M9,23 L17,7" stroke="#5a6270" stroke-width="1"/><path d="M56,27 L66,3 H166 L156,27Z" fill="#3b4453"/><path d="M198,23 L204,7" stroke="#5a6270" stroke-width="1"/></svg>
<div class="t" style="left:25px;top:176.84px;font-size:12px;color:#f0f0f0;">Start</div>
<div class="t" style="left:73px;top:176.84px;font-size:12px;color:#f0f0f0;font-weight:bold;transform:scaleX(0.93);transform-origin:0 0">figuras_geo</div>
<svg class="r" style="left:145px;top:176px;" width="10" height="10" viewBox="0 0 10 10"><path d="M1,1 L9,9 M9,1 L1,9" stroke="#bbb" stroke-width="1.6"/></svg>
<svg class="r" style="left:175px;top:176px;" width="12" height="12" viewBox="0 0 12 12"><path d="M6,0 V12 M0,6 H12" stroke="#eee" stroke-width="1.8"/></svg>
<svg class="r" style="left:0;top:199px" width="1920" height="808" viewBox="0 199 1920 808"><defs><filter id="sh" x="-5%" y="-5%" width="110%" height="110%"><feGaussianBlur stdDeviation="3"/></filter><filter id="gl" x="-50%" y="-50%" width="200%" height="200%"><feGaussianBlur stdDeviation="1.5"/></filter></defs><rect x="469" y="260" width="968" height="686" fill="#5a5a5a" opacity="0.4" filter="url(#sh)"/><rect x="471.5" y="262.5" width="961" height="679" fill="#ffffff" stroke="#555" stroke-width="1"/><rect x="483.2" y="273.9" width="938" height="656.6" fill="none" stroke="#2b2b2b" stroke-width="5.5"/><rect x="420.5" y="220.5" width="579.5" height="402.0" fill="none" stroke="#f0902c" stroke-width="1.2"/><rect x="900" y="225.5" width="599.5" height="401.0" fill="none" stroke="#f0902c" stroke-width="1.2"/><rect x="477.5" y="538.5" width="409.0" height="402.0" fill="none" stroke="#f0902c" stroke-width="1.2"/><rect x="745.5" y="600" width="409.0" height="420" fill="none" stroke="#f0902c" stroke-width="1.2"/><rect x="1030.5" y="600" width="409.0" height="367.5" fill="none" stroke="#f0902c" stroke-width="1.2"/><line x1="503.5" y1="306" x2="503.5" y2="544" stroke="#ff1010" stroke-width="1.2" /><line x1="503" y1="306.5" x2="600" y2="306.5" stroke="#ff1010" stroke-width="1.2" /><line x1="503" y1="504.5" x2="600" y2="504.5" stroke="#ff1010" stroke-width="1.2" /><line x1="503" y1="535.5" x2="600" y2="535.5" stroke="#ff1010" stroke-width="1.2" /><line x1="503.5" y1="535" x2="610" y2="428" stroke="#ff1010" stroke-width="1.2" /><line x1="497" y1="511" x2="510" y2="498" stroke="#ff1010" stroke-width="3" /><line x1="503.5" y1="527" x2="503.5" y2="544" stroke="#ff1010" stroke-width="3" /><line x1="495" y1="527" x2="503.5" y2="535" stroke="#ff1010" stroke-width="1" /><text x="517" y="563" font-family="Liberation Serif" font-size="23.5" fill="#3a7a68" >Quadrado</text><polyline points="675.25,545.5 490,679.5 561,897 790,897 860.5,679.5 675.25,545.5" fill="none" stroke="#00ffff" stroke-width="1.3"/><line x1="561" y1="897" x2="790" y2="897" stroke="#00ffff" stroke-width="2" /><line x1="490" y1="717.5" x2="860.5" y2="717.5" stroke="#ff1010" stroke-width="1.2" /><line x1="490.5" y1="684" x2="490.5" y2="730" stroke="#ff1010" stroke-width="1.2" /><line x1="675.5" y1="545" x2="675.5" y2="730" stroke="#ff1010" stroke-width="1.2" /><line x1="860.5" y1="705" x2="860.5" y2="717" stroke="#ff1010" stroke-width="1" /><line x1="483" y1="724" x2="497" y2="710" stroke="#ff1010" stroke-width="3" /><line x1="668.5" y1="724" x2="682.5" y2="710" stroke="#ff1010" stroke-width="3" /><line x1="853.5" y1="724" x2="867.5" y2="710" stroke="#ff1010" stroke-width="3" /><text x="563" y="709" font-family="Liberation Serif" font-size="17.5" fill="#00ff00" >0,809</text><text x="749" y="709" font-family="Liberation Serif" font-size="17.5" fill="#00ff00" >0,809</text><path d="M533,808.5 A93,93 0 0 1 654,897" fill="none" stroke="#ff1010" stroke-width="1.3"/><line x1="529" y1="817" x2="537" y2="801" stroke="#ff1010" stroke-width="3" /><line x1="648" y1="891" x2="660" y2="903" stroke="#ff1010" stroke-width="3" /><text x="0" y="0" font-family="Liberation Serif" font-size="17.5" fill="#00ff00" transform="translate(605,808) rotate(33)">108°</text><line x1="561" y1="875" x2="790" y2="875" stroke="#ff1010" stroke-width="1.2" /><line x1="561.5" y1="862" x2="561.5" y2="893" stroke="#ff1010" stroke-width="1.2" /><line x1="790.5" y1="862" x2="790.5" y2="893" stroke="#ff1010" stroke-width="1.2" /><line x1="554" y1="882" x2="568" y2="868" stroke="#ff1010" stroke-width="3" /><line x1="783" y1="882" x2="797" y2="868" stroke="#ff1010" stroke-width="3" /><text x="655" y="865" font-family="Liberation Serif" font-size="17.5" fill="#00ff00" >1,000</text><text x="626" y="922.5" font-family="Liberation Serif" font-size="23.5" fill="#3a7a68" >Pentágono</text><polyline points="828.3,885.2 944,689.5 1058.2,885.2" fill="none" stroke="#00ff00" stroke-width="1.3"/><line x1="828.3" y1="885.5" x2="1058.2" y2="885.5" stroke="#00ff00" stroke-width="2" /><line x1="828" y1="894.5" x2="1058" y2="894.5" stroke="#ff1010" stroke-width="1.2" /><line x1="828.5" y1="888" x2="828.5" y2="906" stroke="#ff1010" stroke-width="1.2" /><line x1="1058.5" y1="888" x2="1058.5" y2="906" stroke="#ff1010" stroke-width="1.2" /><line x1="821" y1="901" x2="835" y2="887" stroke="#ff1010" stroke-width="3" /><line x1="1051" y1="901" x2="1065" y2="887" stroke="#ff1010" stroke-width="3" /><text x="899" y="917" font-family="Liberation Serif" font-size="23.5" fill="#3a7a68" >Triângulo</text><text x="923" y="886" font-family="Liberation Serif" font-size="17.5" fill="#00ff00" >1,000</text><g filter="url(#gl)" opacity="0.9"><line x1="984" y1="687" x2="984" y2="885" stroke="#6a8cff" stroke-width="5"/><line x1="944" y1="687" x2="997" y2="687" stroke="#6a8cff" stroke-width="4"/><line x1="944" y1="885" x2="997" y2="885" stroke="#6a8cff" stroke-width="4"/></g><line x1="984" y1="687" x2="984" y2="885" stroke="#b02c5c" stroke-width="2.2" /><line x1="944" y1="687" x2="997" y2="687" stroke="#b02c5c" stroke-width="2" /><line x1="944" y1="885" x2="997" y2="885" stroke="#b02c5c" stroke-width="2" /><g filter="url(#gl)"><text x="0" y="0" font-family="Liberation Serif" font-size="17.5" fill="#70a0ff" transform="translate(973,806) rotate(-90)">0,866</text></g><text x="0" y="0" font-family="Liberation Serif" font-size="17.5" fill="#10d060" transform="translate(973,806) rotate(-90)">0,866</text><rect x="939" y="682" width="10" height="10" fill="#1e8cf0" stroke="#1a2a40" stroke-width="1"/><rect x="979" y="682" width="10" height="10" fill="#1e8cf0" stroke="#1a2a40" stroke-width="1"/><rect x="965" y="781" width="10" height="10" fill="#1e8cf0" stroke="#1a2a40" stroke-width="1"/><rect x="939" y="880" width="10" height="10" fill="#1e8cf0" stroke="#1a2a40" stroke-width="1"/><rect x="979" y="880" width="10" height="10" fill="#1e8cf0" stroke="#1a2a40" stroke-width="1"/><polyline points="1066.5,640 1066.5,881 1390.5,881 1390.5,640" fill="none" stroke="#0000ff" stroke-width="1.3"/><line x1="1066" y1="854.5" x2="1390" y2="854.5" stroke="#ff1010" stroke-width="1.2" /><line x1="1066.5" y1="842" x2="1066.5" y2="872" stroke="#ff1010" stroke-width="1.2" /><line x1="1390.5" y1="842" x2="1390.5" y2="870" stroke="#ff1010" stroke-width="1.2" /><line x1="1059" y1="861" x2="1073" y2="847" stroke="#ff1010" stroke-width="3" /><line x1="1383" y1="861" x2="1397" y2="847" stroke="#ff1010" stroke-width="3" /><line x1="1066" y1="881" x2="1392" y2="652" stroke="#ff1010" stroke-width="1.2" /><line x1="1365.5" y1="640" x2="1365.5" y2="881" stroke="#ff1010" stroke-width="1.2" /><line x1="1357" y1="873" x2="1374" y2="889" stroke="#ff1010" stroke-width="3" /><line x1="1365" y1="653" x2="1372" y2="660" stroke="#ff1010" stroke-width="3" /><line x1="1388.5" y1="661" x2="1390.5" y2="653" stroke="#ff1010" stroke-width="3" /><line x1="1052" y1="901" x2="1065" y2="887" stroke="#ff1010" stroke-width="3" /><line x1="1066.5" y1="872" x2="1065" y2="889" stroke="#ff1010" stroke-width="3" /><line x1="1059" y1="870" x2="1065" y2="879" stroke="#ff1010" stroke-width="1" /><text x="1208" y="846" font-family="Liberation Serif" font-size="17.5" fill="#00ff00" >1,414</text><text x="0" y="0" font-family="Liberation Serif" font-size="17.5" fill="#00ff00" transform="translate(1206,773.5) rotate(-35)">1,732</text><text x="0" y="0" font-family="Liberation Serif" font-size="17.5" fill="#00ff00" transform="translate(1356,786) rotate(-90)">1,000</text><text x="1178" y="917" font-family="Liberation Serif" font-size="23.5" fill="#3a7a68" >Retângulo raíz de 2</text><line x1="414.5" y1="793" x2="414.5" y2="932" stroke="#111" stroke-width="1" /><line x1="414.5" y1="943" x2="414.5" y2="1007" stroke="#111" stroke-width="1" /><line x1="270" y1="937.5" x2="409" y2="937.5" stroke="#111" stroke-width="1" /><line x1="420" y1="937.5" x2="559" y2="937.5" stroke="#111" stroke-width="1" /><rect x="409.5" y="932.5" width="10" height="10" fill="#8a8a8a" stroke="#111" stroke-width="1.2"/><path d="M16.5,904.5 V990 H66.5 Z" fill="none" stroke="#1a4cf0" stroke-width="1.3"/><path d="M16.5,982.5 H24.5 V990 M18,930 L24.5,936 L31,930 M24.5,936 V942.5 M44,976 L56,990 M44,990 L57.5,975.5" fill="none" stroke="#1a4cf0" stroke-width="1.2"/></svg>
<div class="r" style="left:555px;top:203px;width:919px;height:451px;background:#2b313c;border-radius:4px 3px 3px 4px"></div><div class="r" style="left:577px;top:207px;width:1px;height:444px;background:#232830;"></div><div class="r" style="left:578px;top:207px;width:893px;height:444px;background:#3b4453;border-radius:3px"></div><svg class="r" style="left:562px;top:209px;" width="10" height="10" viewBox="0 0 10 10"><path d="M1,1 L9,9 M9,1 L1,9" stroke="#d8d8d8" stroke-width="2.2"/></svg><svg class="r" style="left:562px;top:227px;" width="10" height="11" viewBox="0 0 10 11"><path d="M1.5,0 V11" stroke="#d0d0d0" stroke-width="1.6"/><path d="M9,2 L4,5.5 L9,9Z" fill="#d0d0d0"/></svg><svg class="r" style="left:561px;top:245px;" width="12" height="12" viewBox="0 0 12 12"><path d="M6,0 V12 M0,6 H12 M1.8,1.8 L10.2,10.2 M10.2,1.8 L1.8,10.2" stroke="#d8d8d8" stroke-width="2.2"/><circle cx="6" cy="6" r="2.5" fill="#2b313c"/></svg><div class="t" style="left:0px;top:-10.16px;font-size:12px;color:#e8e8e8;transform:translate(561px,636px) rotate(-90deg) scaleX(0.87);transform-origin:0 0">LAYER PROPERTIES MANAGER</div><svg class="r" style="left:559px;top:634px;" width="17" height="18" viewBox="0 0 17 18"><path d="M1,6 L6,1 H16 L11,6Z" fill="#dcdcdc"/><path d="M1,9 H9 M1,12 H9 M1,15 H9" stroke="#dcdcdc" stroke-width="1.6"/><rect x="9" y="8" width="8" height="10" fill="#f4f4f4"/><rect x="10.5" y="9.5" width="5" height="3" fill="#5ab4ea"/><path d="M11,15 H16 M11,15 L12.5,13.5 M11,15 L12.5,16.5" stroke="#333" stroke-width="0.8"/></svg><div class="t" style="left:586px;top:219.84px;font-size:12px;color:#f0f0f0;transform:scaleX(0.965);transform-origin:0 0">Current layer: cotas</div><div class="r" style="left:1344px;top:214px;width:125px;height:16px;background:#4a5568;"></div><div class="t" style="left:1345px;top:216.27px;font-size:11.5px;color:#b8bec8;">Search for layer</div><svg class="r" style="left:1453px;top:215px;" width="14" height="14" viewBox="0 0 14 14"><circle cx="6" cy="6" r="4.5" stroke="#f0f0f0" stroke-width="1.2" fill="#6a7488"/><path d="M9.5,9.5 L13,13" stroke="#e0a860" stroke-width="1.8"/></svg><svg class="r" style="left:584px;top:241px;" width="16" height="15" viewBox="0 0 16 15"><path d="M0,1 H6 L7.5,3 H14 V6 H0Z" fill="#dcdcdc"/><path d="M0,6 H14 V12 H0Z" fill="#dcdcdc"/><path d="M7,7 H16 L12.5,11 V15 H10.5 V11Z" fill="#dcdcdc" stroke="#3b4453" stroke-width="0.8"/></svg><svg class="r" style="left:607px;top:241px;" width="15" height="12" viewBox="0 0 15 12"><path d="M0,0 H6 L7.5,2 H14 V12 H0Z" fill="#dcdcdc"/><path d="M0,3 H14" stroke="#3b4453"/></svg><div class="r" style="left:629px;top:238px;width:1px;height:18px;background:#555e6c;"></div><svg class="r" style="left:637px;top:240px;" width="17" height="17" viewBox="0 0 17 17"><path d="M1,6 L6,1 H15 L10,6Z" fill="#dcdcdc"/><path d="M1,9 H8 M1,12 H8" stroke="#dcdcdc" stroke-width="1.6"/><rect x="9" y="7" width="8" height="10" fill="#f4f4f4"/><rect x="10.5" y="8.5" width="5" height="3" fill="#5ab4ea"/><path d="M11,14 H16 M11,14 L12.5,12.5" stroke="#333" stroke-width="0.8"/></svg><svg class="r" style="left:682px;top:240px;" width="17" height="17" viewBox="0 0 17 17"><path d="M1,4 L4,1 H14 L11,4Z M1,8 L4,5 H14 L11,8Z M1,12 L4,9 H12 L9,12Z" fill="#dcdcdc"/><path d="M12,8 V17 M7.5,12.5 H16.5 M9,9.5 L15,15.5 M15,9.5 L9,15.5" stroke="#f5c66a" stroke-width="1.3"/><circle cx="12" cy="12.5" r="2.3" fill="#f5c66a"/></svg><svg class="r" style="left:705px;top:240px;" width="17" height="17" viewBox="0 0 17 17"><path d="M1,4 L4,1 H14 L11,4Z M1,8 L4,5 H14 L11,8Z M1,12 L4,9 H12 L9,12Z" fill="#dcdcdc"/><path d="M12,9 V17 M8.5,11 L15.5,15 M15.5,11 L8.5,15" stroke="#5fd0d8" stroke-width="1.4"/><circle cx="12" cy="13" r="2" fill="none" stroke="#5fd0d8" stroke-width="1"/></svg><svg class="r" style="left:728px;top:240px;" width="17" height="17" viewBox="0 0 17 17"><path d="M1,4 L4,1 H14 L11,4Z M1,8 L4,5 H14 L11,8Z M1,12 L4,9 H12 L9,12Z" fill="#dcdcdc"/><path d="M9,10 L15,16 M15,10 L9,16" stroke="#f04848" stroke-width="1.8"/></svg><svg class="r" style="left:751px;top:240px;" width="17" height="17" viewBox="0 0 17 17"><path d="M1,4 L4,1 H14 L11,4Z M1,8 L4,5 H14 L11,8Z M1,12 L4,9 H12 L9,12Z" fill="#dcdcdc"/><path d="M8,13 L11,16 L16,9" stroke="#50c878" stroke-width="1.8" fill="none"/></svg><svg class="r" style="left:1396px;top:240px;" width="18" height="16" viewBox="0 0 18 16"><path d="M3,7 A6,6 0 0 1 14,4" stroke="#40c870" stroke-width="2.4" fill="none"/><path d="M15,0 V6 H9Z" fill="#40c870"/><path d="M15,9 A6,6 0 0 1 4,12" stroke="#40c870" stroke-width="2.4" fill="none"/><path d="M3,16 V10 H9Z" fill="#40c870"/></svg><svg class="r" style="left:1421px;top:240px;" width="17" height="15" viewBox="0 0 17 15"><rect x="1" y="0" width="8" height="9" fill="#dcdcdc"/><path d="M1,15 L6,10 H16 L11,15Z" fill="#8a929e"/></svg><svg class="r" style="left:1443px;top:239px;" width="17" height="17" viewBox="0 0 17 17"><path d="M8.5,0.5 V16.5 M0.5,8.5 H16.5 M2.8,2.8 L14.2,14.2 M14.2,2.8 L2.8,14.2" stroke="#e0e0e0" stroke-width="3.2"/><circle cx="8.5" cy="8.5" r="5.6" fill="#e0e0e0"/><circle cx="8.5" cy="8.5" r="2.4" fill="#3b4453"/></svg><div class="r" style="left:580px;top:259px;width:95px;height:336px;background:#3b4453;border:1px solid #2d3440"></div><div class="r" style="left:581px;top:260px;width:93px;height:21px;background:#3d4656;"></div><div class="r" style="left:581px;top:281px;width:93px;height:1px;background:#2d3440;"></div><div class="t" style="left:586px;top:264.84px;font-size:12px;color:#f0f0f0;transform:scaleX(0.95);transform-origin:0 0">Filters</div><svg class="r" style="left:657px;top:265px;" width="13" height="10" viewBox="0 0 13 10"><path d="M6,1 L2,5 L6,9 M11,1 L7,5 L11,9" stroke="#dcdcdc" stroke-width="2" fill="none"/></svg><div class="r" style="left:588px;top:290px;width:10px;height:10px;background:#e8e8e8;border:1px solid #aaa"></div><div class="r" style="left:590px;top:294.5px;width:6px;height:1.2px;background:#3050a0;"></div><svg class="r" style="left:598px;top:290px;" width="10" height="10" viewBox="0 0 10 10"><path d="M0,5 H8" stroke="#ddd" stroke-dasharray="1,1.5"/></svg><svg class="r" style="left:605px;top:288px;" width="14" height="13" viewBox="0 0 14 13"><path d="M1,4 L4,1 H12 L9,4Z M1,7 L4,4 H12 L9,7Z M1,10 L4,7 H8 V10Z" fill="#dcdcdc"/><path d="M6,9 L8.5,11.5 L13,6" stroke="#40c870" stroke-width="1.8" fill="none"/></svg><div class="r" style="left:622px;top:286px;width:18px;height:18px;background:#6b7c99;"></div><div class="t" style="left:624px;top:289.84px;font-size:12px;color:#f0f0f0;">All</div><svg class="r" style="left:611px;top:303px;" width="32" height="34" viewBox="0 0 32 34"><path d="M1.5,0 V28 H10 M1.5,10 H15" stroke="#ddd" stroke-dasharray="1,1.5" fill="none"/></svg><svg class="r" style="left:624px;top:307px;" width="16" height="13" viewBox="0 0 16 13"><path d="M0,1 H5 L6,2.5 H12 V5 H0Z" fill="#dcdcdc"/><path d="M0,5 H12 V10 H0Z" fill="#dcdcdc"/><path d="M6,6 H15 L11.5,9.5 V13 H9.5 V9.5Z" fill="#dcdcdc" stroke="#3b4453" stroke-width="0.8"/></svg><div class="t" style="left:642px;top:307.84px;font-size:12px;color:#f0f0f0;">All Us</div><svg class="r" style="left:624px;top:325px;" width="15" height="13" viewBox="0 0 15 13"><path d="M0,4 V0 H4 M10,0 H13 V3 M0,8 V12 H4" stroke="#ddd" stroke-width="1.1" fill="none"/><rect x="3" y="3" width="7" height="6" stroke="#ddd" fill="none"/><path d="M6,13 L9,10 H15 L12,13Z" fill="#5ab4ea"/></svg><div class="t" style="left:642px;top:325.84px;font-size:12px;color:#f0f0f0;">Viewp</div><div class="r" style="left:674px;top:282px;width:1px;height:312px;background:#2d3440;"></div><div class="r" style="left:582px;top:573px;width:91px;height:17px;background:#f0f0f0;border:1px solid #6a7280"></div><div class="r" style="left:598px;top:574px;width:33px;height:15px;background:#cdcdcd;"></div><svg class="r" style="left:586px;top:577px;" width="8" height="10" viewBox="0 0 8 10"><path d="M6,1 L2,5 L6,9" stroke="#555" stroke-width="1.6" fill="none"/></svg><svg class="r" style="left:662px;top:577px;" width="8" height="10" viewBox="0 0 8 10"><path d="M2,1 L6,5 L2,9" stroke="#555" stroke-width="1.6" fill="none"/></svg><div class="r" style="left:580px;top:593px;width:95px;height:21px;background:#3b4453;border:1px solid #2d3440"></div><div class="r" style="left:585px;top:596px;width:13px;height:13px;background:#ffffff;border:1px solid #555"></div><div class="t" style="left:602px;top:595.84px;font-size:12px;color:#f0f0f0;">Invert&nbsp;&nbsp;fi</div><svg class="r" style="left:657px;top:599px;" width="13" height="10" viewBox="0 0 13 10"><path d="M6,1 L2,5 L6,9 M11,1 L7,5 L11,9" stroke="#dcdcdc" stroke-width="2" fill="none"/></svg><div class="r" style="left:679px;top:259px;width:790px;height:23px;background:#404959;"></div><div class="r" style="left:770px;top:259px;width:2px;height:337px;background:#2d3440;"></div><div class="r" style="left:696px;top:259px;width:1px;height:23px;background:#2d3440;"></div><div class="r" style="left:789.5px;top:259px;width:1px;height:23px;background:#2d3440;"></div><div class="r" style="left:807.5px;top:259px;width:1px;height:23px;background:#2d3440;"></div><div class="r" style="left:825.5px;top:259px;width:1px;height:23px;background:#2d3440;"></div><div class="r" style="left:843.5px;top:259px;width:1px;height:23px;background:#2d3440;"></div><div class="r" style="left:865.5px;top:259px;width:1px;height:23px;background:#2d3440;"></div><div class="r" style="left:913.5px;top:259px;width:1px;height:23px;background:#2d3440;"></div><div class="r" style="left:961.5px;top:259px;width:1px;height:23px;background:#2d3440;"></div><div class="r" style="left:1025.5px;top:259px;width:1px;height:23px;background:#2d3440;"></div><div class="r" style="left:1089.5px;top:259px;width:1px;height:23px;background:#2d3440;"></div><div class="r" style="left:1157.5px;top:259px;width:1px;height:23px;background:#2d3440;"></div><div class="r" style="left:1225.5px;top:259px;width:1px;height:23px;background:#2d3440;"></div><div class="r" style="left:1279.5px;top:259px;width:1px;height:23px;background:#2d3440;"></div><div class="r" style="left:1333.5px;top:259px;width:1px;height:23px;background:#2d3440;"></div><div class="r" style="left:1351.5px;top:259px;width:1px;height:23px;background:#2d3440;"></div><div class="r" style="left:679px;top:281px;width:790px;height:1px;background:#2d3440;"></div><div class="t" style="left:683px;top:264.84px;font-size:12px;color:#f0f0f0;">S..</div><div class="t" style="left:701px;top:264.84px;font-size:12px;color:#f0f0f0;">Name</div><div class="t" style="left:776px;top:264.84px;font-size:12px;color:#f0f0f0;">O.</div><div class="t" style="left:794px;top:264.84px;font-size:12px;color:#f0f0f0;">F..</div><div class="t" style="left:812px;top:264.84px;font-size:12px;color:#f0f0f0;">V..</div><div class="t" style="left:830px;top:264.84px;font-size:12px;color:#f0f0f0;">L..</div><div class="t" style="left:848px;top:264.84px;font-size:12px;color:#f0f0f0;">P...</div><div class="t" style="left:870px;top:264.84px;font-size:12px;color:#f0f0f0;">Color</div><div class="t" style="left:917px;top:264.84px;font-size:12px;color:#f0f0f0;">VP C...</div><div class="t" style="left:966px;top:264.84px;font-size:12px;color:#f0f0f0;">Linetype</div><div class="t" style="left:1030px;top:264.84px;font-size:12px;color:#f0f0f0;">VP Linet...</div><div class="t" style="left:1094px;top:264.84px;font-size:12px;color:#f0f0f0;">Lineweight</div><div class="t" style="left:1162px;top:264.84px;font-size:12px;color:#f0f0f0;">VP Linew...</div><div class="t" style="left:1231px;top:264.84px;font-size:12px;color:#f0f0f0;">Transp...</div><div class="t" style="left:1285px;top:264.84px;font-size:12px;color:#f0f0f0;">VP Tra...</div><div class="t" style="left:1338px;top:264.84px;font-size:12px;color:#f0f0f0;">N.</div><div class="t" style="left:1356px;top:264.84px;font-size:12px;color:#f0f0f0;">Description</div><svg class="r" style="left:762px;top:268px;" width="8" height="5" viewBox="0 0 8 5"><path d="M0,5 L4,0 L8,5Z" fill="#dcdcdc"/></svg><div class="r" style="left:679px;top:282px;width:91px;height:18px;background:#6b7c99;"></div><div class="r" style="left:772px;top:282px;width:697px;height:18px;background:#6b7c99;"></div><svg class="r" style="left:681px;top:289px;" width="14" height="7" viewBox="0 0 14 7"><path d="M3,0 H14 L11,7 H0Z" fill="#7cc4f4"/></svg><div class="t" style="left:700px;top:284.84px;font-size:12px;color:#f0f0f0;">0</div><svg class="r" style="left:776px;top:285px;" width="10" height="13" viewBox="0 0 10 13"><circle cx="5" cy="5" r="4.8" fill="#f5c66a"/><rect x="3" y="10" width="4" height="3" fill="#eee"/></svg><svg class="r" style="left:791px;top:284px;" width="14" height="14" viewBox="0 0 14 14"><circle cx="7" cy="7" r="3.5" fill="#f5c66a"/><path d="M7,0 V2 M7,12 V14 M0,7 H2 M12,7 H14 M2,2 L3.4,3.4 M10.6,10.6 L12,12 M12,2 L10.6,3.4 M3.4,10.6 L2,12" stroke="#f5c66a" stroke-width="1.1"/></svg><svg class="r" style="left:811px;top:285px;" width="13" height="13" viewBox="0 0 13 13"><path d="M0.5,4 V0.5 H4 M8,0.5 H11.5 V4 M0.5,8 V11.5 H4" stroke="#d8d8d8" fill="none"/><rect x="3" y="3" width="6" height="6" fill="#7a8290" stroke="#ccc" stroke-width="0.7"/><circle cx="9.5" cy="9.5" r="2.3" fill="#f5c66a"/><circle cx="9.5" cy="9.5" r="3.6" stroke="#f5c66a" stroke-dasharray="0.8,1.2" fill="none" stroke-width="0.8"/></svg><svg class="r" style="left:828px;top:284px;" width="12" height="13" viewBox="0 0 12 13"><rect x="0" y="6" width="8.5" height="7" fill="#f5c66a"/><path d="M5.5,6 V3.2 A2.7,2.7 0 0 1 11,3.2 V4.5" stroke="#f5c66a" stroke-width="1.6" fill="none"/><rect x="3.5" y="8.5" width="1.5" height="2.5" fill="#3b4453"/></svg><svg class="r" style="left:849px;top:285px;" width="14" height="14" viewBox="0 0 14 14"><rect x="3" y="0" width="7" height="4" fill="#e8e8e8"/><rect x="0" y="4" width="13" height="6" rx="1" fill="#e8e8e8"/><rect x="2.5" y="8" width="8" height="5" fill="#e8e8e8" stroke="#3b4453" stroke-width="0.8"/><rect x="3.5" y="10.5" width="6" height="2" fill="#5ab4ea"/></svg><div class="r" style="left:869px;top:285px;width:12px;height:12px;background:#000000;border:1px solid #c8c8c8"></div><div class="t" style="left:885px;top:284.84px;font-size:12px;color:#f0f0f0;">wh...</div><div class="r" style="left:917px;top:285px;width:12px;height:12px;background:#000000;border:1px solid #c8c8c8"></div><div class="t" style="left:933px;top:284.84px;font-size:12px;color:#f0f0f0;">wh...</div><div class="t" style="left:965px;top:284.84px;font-size:12px;color:#f0f0f0;">Continu...</div><div class="t" style="left:1029px;top:284.84px;font-size:12px;color:#f0f0f0;">Continu...</div><div class="r" style="left:1091px;top:291px;width:22px;height:1px;background:#e8e8e8;"></div><div class="t" style="left:1119px;top:284.84px;font-size:12px;color:#f0f0f0;transform:scaleX(0.95);transform-origin:0 0">Defa...</div><div class="r" style="left:1159px;top:291px;width:22px;height:1px;background:#e8e8e8;"></div><div class="t" style="left:1187px;top:284.84px;font-size:12px;color:#f0f0f0;transform:scaleX(0.95);transform-origin:0 0">Defa...</div><div class="t" style="left:1229px;top:284.84px;font-size:12px;color:#f0f0f0;">0</div><div class="t" style="left:1284px;top:284.84px;font-size:12px;color:#f0f0f0;">0</div><svg class="r" style="left:1337px;top:285px;" width="13" height="13" viewBox="0 0 13 13"><path d="M0.5,4 V0.5 H4 M8,0.5 H11.5 V4 M0.5,8 V11.5 H4" stroke="#d8d8d8" fill="none"/><rect x="3" y="3" width="6" height="6" fill="#7a8290" stroke="#ccc" stroke-width="0.7"/><circle cx="9.5" cy="9.5" r="2.3" fill="#f5c66a"/><circle cx="9.5" cy="9.5" r="3.6" stroke="#f5c66a" stroke-dasharray="0.8,1.2" fill="none" stroke-width="0.8"/></svg><svg class="r" style="left:681px;top:307px;" width="14" height="7" viewBox="0 0 14 7"><path d="M3,0 H14 L11,7 H0Z" fill="#7cc4f4"/></svg><div class="t" style="left:700px;top:302.84px;font-size:12px;color:#f0f0f0;">circulo</div><svg class="r" style="left:776px;top:303px;" width="10" height="13" viewBox="0 0 10 13"><circle cx="5" cy="5" r="4.8" fill="#f5c66a"/><rect x="3" y="10" width="4" height="3" fill="#eee"/></svg><svg class="r" style="left:791px;top:302px;" width="14" height="14" viewBox="0 0 14 14"><circle cx="7" cy="7" r="3.5" fill="#f5c66a"/><path d="M7,0 V2 M7,12 V14 M0,7 H2 M12,7 H14 M2,2 L3.4,3.4 M10.6,10.6 L12,12 M12,2 L10.6,3.4 M3.4,10.6 L2,12" stroke="#f5c66a" stroke-width="1.1"/></svg><svg class="r" style="left:811px;top:303px;" width="13" height="13" viewBox="0 0 13 13"><path d="M0.5,4 V0.5 H4 M8,0.5 H11.5 V4 M0.5,8 V11.5 H4" stroke="#d8d8d8" fill="none"/><rect x="3" y="3" width="6" height="6" fill="#7a8290" stroke="#ccc" stroke-width="0.7"/><circle cx="9.5" cy="9.5" r="2.3" fill="#f5c66a"/><circle cx="9.5" cy="9.5" r="3.6" stroke="#f5c66a" stroke-dasharray="0.8,1.2" fill="none" stroke-width="0.8"/></svg><svg class="r" style="left:828px;top:302px;" width="12" height="13" viewBox="0 0 12 13"><rect x="0" y="6" width="8.5" height="7" fill="#f5c66a"/><path d="M5.5,6 V3.2 A2.7,2.7 0 0 1 11,3.2 V4.5" stroke="#f5c66a" stroke-width="1.6" fill="none"/><rect x="3.5" y="8.5" width="1.5" height="2.5" fill="#3b4453"/></svg><svg class="r" style="left:849px;top:303px;" width="14" height="14" viewBox="0 0 14 14"><rect x="3" y="0" width="7" height="4" fill="#e8e8e8"/><rect x="0" y="4" width="13" height="6" rx="1" fill="#e8e8e8"/><rect x="2.5" y="8" width="8" height="5" fill="#e8e8e8" stroke="#3b4453" stroke-width="0.8"/><rect x="3.5" y="10.5" width="6" height="2" fill="#5ab4ea"/></svg><div class="r" style="left:869px;top:303px;width:12px;height:12px;background:#ffff00;border:1px solid #c8c8c8"></div><div class="t" style="left:885px;top:302.84px;font-size:12px;color:#f0f0f0;">yel...</div><div class="r" style="left:917px;top:303px;width:12px;height:12px;background:#ffff00;border:1px solid #c8c8c8"></div><div class="t" style="left:933px;top:302.84px;font-size:12px;color:#f0f0f0;">yel...</div><div class="t" style="left:965px;top:302.84px;font-size:12px;color:#f0f0f0;">Continu...</div><div class="t" style="left:1029px;top:302.84px;font-size:12px;color:#f0f0f0;">Continu...</div><div class="r" style="left:1091px;top:309px;width:22px;height:1px;background:#e8e8e8;"></div><div class="t" style="left:1119px;top:302.84px;font-size:12px;color:#f0f0f0;transform:scaleX(0.95);transform-origin:0 0">Defa...</div><div class="r" style="left:1159px;top:309px;width:22px;height:1px;background:#e8e8e8;"></div><div class="t" style="left:1187px;top:302.84px;font-size:12px;color:#f0f0f0;transform:scaleX(0.95);transform-origin:0 0">Defa...</div><div class="t" style="left:1229px;top:302.84px;font-size:12px;color:#f0f0f0;">0</div><div class="t" style="left:1284px;top:302.84px;font-size:12px;color:#f0f0f0;">0</div><svg class="r" style="left:1337px;top:303px;" width="13" height="13" viewBox="0 0 13 13"><path d="M0.5,4 V0.5 H4 M8,0.5 H11.5 V4 M0.5,8 V11.5 H4" stroke="#d8d8d8" fill="none"/><rect x="3" y="3" width="6" height="6" fill="#7a8290" stroke="#ccc" stroke-width="0.7"/><circle cx="9.5" cy="9.5" r="2.3" fill="#f5c66a"/><circle cx="9.5" cy="9.5" r="3.6" stroke="#f5c66a" stroke-dasharray="0.8,1.2" fill="none" stroke-width="0.8"/></svg><svg class="r" style="left:681px;top:321px;" width="14" height="12" viewBox="0 0 14 12"><path d="M1,6 L5,10 L13,1" stroke="#40c870" stroke-width="2.2" fill="none"/></svg><div class="t" style="left:700px;top:320.84px;font-size:12px;color:#f0f0f0;">cotas</div><svg class="r" style="left:776px;top:321px;" width="10" height="13" viewBox="0 0 10 13"><circle cx="5" cy="5" r="4.8" fill="#f5c66a"/><rect x="3" y="10" width="4" height="3" fill="#eee"/></svg><svg class="r" style="left:791px;top:320px;" width="14" height="14" viewBox="0 0 14 14"><circle cx="7" cy="7" r="3.5" fill="#f5c66a"/><path d="M7,0 V2 M7,12 V14 M0,7 H2 M12,7 H14 M2,2 L3.4,3.4 M10.6,10.6 L12,12 M12,2 L10.6,3.4 M3.4,10.6 L2,12" stroke="#f5c66a" stroke-width="1.1"/></svg><svg class="r" style="left:811px;top:321px;" width="13" height="13" viewBox="0 0 13 13"><path d="M0.5,4 V0.5 H4 M8,0.5 H11.5 V4 M0.5,8 V11.5 H4" stroke="#d8d8d8" fill="none"/><rect x="3" y="3" width="6" height="6" fill="#7a8290" stroke="#ccc" stroke-width="0.7"/><circle cx="9.5" cy="9.5" r="2.3" fill="#f5c66a"/><circle cx="9.5" cy="9.5" r="3.6" stroke="#f5c66a" stroke-dasharray="0.8,1.2" fill="none" stroke-width="0.8"/></svg><svg class="r" style="left:828px;top:320px;" width="12" height="13" viewBox="0 0 12 13"><rect x="0" y="6" width="8.5" height="7" fill="#f5c66a"/><path d="M5.5,6 V3.2 A2.7,2.7 0 0 1 11,3.2 V4.5" stroke="#f5c66a" stroke-width="1.6" fill="none"/><rect x="3.5" y="8.5" width="1.5" height="2.5" fill="#3b4453"/></svg><svg class="r" style="left:849px;top:321px;" width="14" height="14" viewBox="0 0 14 14"><rect x="3" y="0" width="7" height="4" fill="#e8e8e8"/><rect x="0" y="4" width="13" height="6" rx="1" fill="#e8e8e8"/><rect x="2.5" y="8" width="8" height="5" fill="#e8e8e8" stroke="#3b4453" stroke-width="0.8"/><rect x="3.5" y="10.5" width="6" height="2" fill="#5ab4ea"/></svg><div class="r" style="left:869px;top:321px;width:12px;height:12px;background:#ff0000;border:1px solid #c8c8c8"></div><div class="t" style="left:885px;top:320.84px;font-size:12px;color:#f0f0f0;">red</div><div class="r" style="left:917px;top:321px;width:12px;height:12px;background:#ff0000;border:1px solid #c8c8c8"></div><div class="t" style="left:933px;top:320.84px;font-size:12px;color:#f0f0f0;">red</div><div class="t" style="left:965px;top:320.84px;font-size:12px;color:#f0f0f0;">Continu...</div><div class="t" style="left:1029px;top:320.84px;font-size:12px;color:#f0f0f0;">Continu...</div><div class="r" style="left:1091px;top:327px;width:22px;height:1px;background:#e8e8e8;"></div><div class="t" style="left:1119px;top:320.84px;font-size:12px;color:#f0f0f0;transform:scaleX(0.95);transform-origin:0 0">Defa...</div><div class="r" style="left:1159px;top:327px;width:22px;height:1px;background:#e8e8e8;"></div><div class="t" style="left:1187px;top:320.84px;font-size:12px;color:#f0f0f0;transform:scaleX(0.95);transform-origin:0 0">Defa...</div><div class="t" style="left:1229px;top:320.84px;font-size:12px;color:#f0f0f0;">0</div><div class="t" style="left:1284px;top:320.84px;font-size:12px;color:#f0f0f0;">0</div><svg class="r" style="left:1337px;top:321px;" width="13" height="13" viewBox="0 0 13 13"><path d="M0.5,4 V0.5 H4 M8,0.5 H11.5 V4 M0.5,8 V11.5 H4" stroke="#d8d8d8" fill="none"/><rect x="3" y="3" width="6" height="6" fill="#7a8290" stroke="#ccc" stroke-width="0.7"/><circle cx="9.5" cy="9.5" r="2.3" fill="#f5c66a"/><circle cx="9.5" cy="9.5" r="3.6" stroke="#f5c66a" stroke-dasharray="0.8,1.2" fill="none" stroke-width="0.8"/></svg><svg class="r" style="left:681px;top:343px;" width="14" height="7" viewBox="0 0 14 7"><path d="M3,0 H14 L11,7 H0Z" fill="#7cc4f4"/></svg><div class="t" style="left:700px;top:338.84px;font-size:12px;color:#f0f0f0;">Defpoints</div><svg class="r" style="left:776px;top:339px;" width="10" height="13" viewBox="0 0 10 13"><circle cx="5" cy="5" r="4.8" fill="#f5c66a"/><rect x="3" y="10" width="4" height="3" fill="#eee"/></svg><svg class="r" style="left:791px;top:338px;" width="14" height="14" viewBox="0 0 14 14"><circle cx="7" cy="7" r="3.5" fill="#f5c66a"/><path d="M7,0 V2 M7,12 V14 M0,7 H2 M12,7 H14 M2,2 L3.4,3.4 M10.6,10.6 L12,12 M12,2 L10.6,3.4 M3.4,10.6 L2,12" stroke="#f5c66a" stroke-width="1.1"/></svg><svg class="r" style="left:811px;top:339px;" width="13" height="13" viewBox="0 0 13 13"><path d="M0.5,4 V0.5 H4 M8,0.5 H11.5 V4 M0.5,8 V11.5 H4" stroke="#d8d8d8" fill="none"/><rect x="3" y="3" width="6" height="6" fill="#7a8290" stroke="#ccc" stroke-width="0.7"/><circle cx="9.5" cy="9.5" r="2.3" fill="#f5c66a"/><circle cx="9.5" cy="9.5" r="3.6" stroke="#f5c66a" stroke-dasharray="0.8,1.2" fill="none" stroke-width="0.8"/></svg><svg class="r" style="left:828px;top:338px;" width="12" height="13" viewBox="0 0 12 13"><rect x="0" y="6" width="8.5" height="7" fill="#f5c66a"/><path d="M5.5,6 V3.2 A2.7,2.7 0 0 1 11,3.2 V4.5" stroke="#f5c66a" stroke-width="1.6" fill="none"/><rect x="3.5" y="8.5" width="1.5" height="2.5" fill="#3b4453"/></svg><svg class="r" style="left:849px;top:339px;" width="14" height="14" viewBox="0 0 14 14"><rect x="3" y="0" width="7" height="4" fill="#9aa0a8"/><rect x="0" y="4" width="13" height="6" rx="1" fill="#9aa0a8"/><rect x="2.5" y="8" width="8" height="5" fill="#9aa0a8" stroke="#3b4453" stroke-width="0.8"/><rect x="3.5" y="10.5" width="6" height="2" fill="#5ab4ea"/></svg><div class="r" style="left:869px;top:339px;width:12px;height:12px;background:#000000;border:1px solid #c8c8c8"></div><div class="t" style="left:885px;top:338.84px;font-size:12px;color:#f0f0f0;">wh...</div><div class="r" style="left:917px;top:339px;width:12px;height:12px;background:#000000;border:1px solid #c8c8c8"></div><div class="t" style="left:933px;top:338.84px;font-size:12px;color:#f0f0f0;">wh...</div><div class="t" style="left:965px;top:338.84px;font-size:12px;color:#f0f0f0;">Continu...</div><div class="t" style="left:1029px;top:338.84px;font-size:12px;color:#f0f0f0;">Continu...</div><div class="r" style="left:1091px;top:345px;width:22px;height:1px;background:#e8e8e8;"></div><div class="t" style="left:1119px;top:338.84px;font-size:12px;color:#f0f0f0;transform:scaleX(0.95);transform-origin:0 0">Defa...</div><div class="r" style="left:1159px;top:345px;width:22px;height:1px;background:#e8e8e8;"></div><div class="t" style="left:1187px;top:338.84px;font-size:12px;color:#f0f0f0;transform:scaleX(0.95);transform-origin:0 0">Defa...</div><div class="t" style="left:1229px;top:338.84px;font-size:12px;color:#f0f0f0;">0</div><div class="t" style="left:1284px;top:338.84px;font-size:12px;color:#f0f0f0;">0</div><svg class="r" style="left:1337px;top:339px;" width="13" height="13" viewBox="0 0 13 13"><path d="M0.5,4 V0.5 H4 M8,0.5 H11.5 V4 M0.5,8 V11.5 H4" stroke="#d8d8d8" fill="none"/><rect x="3" y="3" width="6" height="6" fill="#7a8290" stroke="#ccc" stroke-width="0.7"/><circle cx="9.5" cy="9.5" r="2.3" fill="#f5c66a"/><circle cx="9.5" cy="9.5" r="3.6" stroke="#f5c66a" stroke-dasharray="0.8,1.2" fill="none" stroke-width="0.8"/></svg><svg class="r" style="left:681px;top:361px;" width="14" height="7" viewBox="0 0 14 7"><path d="M3,0 H14 L11,7 H0Z" fill="#7cc4f4"/></svg><div class="t" style="left:700px;top:356.84px;font-size:12px;color:#f0f0f0;">esquadria</div><svg class="r" style="left:776px;top:357px;" width="10" height="13" viewBox="0 0 10 13"><circle cx="5" cy="5" r="4.8" fill="#f5c66a"/><rect x="3" y="10" width="4" height="3" fill="#eee"/></svg><svg class="r" style="left:791px;top:356px;" width="14" height="14" viewBox="0 0 14 14"><circle cx="7" cy="7" r="3.5" fill="#f5c66a"/><path d="M7,0 V2 M7,12 V14 M0,7 H2 M12,7 H14 M2,2 L3.4,3.4 M10.6,10.6 L12,12 M12,2 L10.6,3.4 M3.4,10.6 L2,12" stroke="#f5c66a" stroke-width="1.1"/></svg><svg class="r" style="left:811px;top:357px;" width="13" height="13" viewBox="0 0 13 13"><path d="M0.5,4 V0.5 H4 M8,0.5 H11.5 V4 M0.5,8 V11.5 H4" stroke="#d8d8d8" fill="none"/><rect x="3" y="3" width="6" height="6" fill="#7a8290" stroke="#ccc" stroke-width="0.7"/><circle cx="9.5" cy="9.5" r="2.3" fill="#f5c66a"/><circle cx="9.5" cy="9.5" r="3.6" stroke="#f5c66a" stroke-dasharray="0.8,1.2" fill="none" stroke-width="0.8"/></svg><svg class="r" style="left:828px;top:356px;" width="12" height="13" viewBox="0 0 12 13"><rect x="0" y="6" width="8.5" height="7" fill="#f5c66a"/><path d="M5.5,6 V3.2 A2.7,2.7 0 0 1 11,3.2 V4.5" stroke="#f5c66a" stroke-width="1.6" fill="none"/><rect x="3.5" y="8.5" width="1.5" height="2.5" fill="#3b4453"/></svg><svg class="r" style="left:849px;top:357px;" width="14" height="14" viewBox="0 0 14 14"><rect x="3" y="0" width="7" height="4" fill="#e8e8e8"/><rect x="0" y="4" width="13" height="6" rx="1" fill="#e8e8e8"/><rect x="2.5" y="8" width="8" height="5" fill="#e8e8e8" stroke="#3b4453" stroke-width="0.8"/><rect x="3.5" y="10.5" width="6" height="2" fill="#5ab4ea"/></svg><div class="r" style="left:869px;top:357px;width:12px;height:12px;background:#2d2d2d;border:1px solid #c8c8c8"></div><div class="t" style="left:885px;top:356.84px;font-size:12px;color:#f0f0f0;">251</div><div class="r" style="left:917px;top:357px;width:12px;height:12px;background:#2d2d2d;border:1px solid #c8c8c8"></div><div class="t" style="left:933px;top:356.84px;font-size:12px;color:#f0f0f0;">251</div><div class="t" style="left:965px;top:356.84px;font-size:12px;color:#f0f0f0;">Continu...</div><div class="t" style="left:1029px;top:356.84px;font-size:12px;color:#f0f0f0;">Continu...</div><div class="r" style="left:1091px;top:363px;width:22px;height:1px;background:#e8e8e8;"></div><div class="t" style="left:1119px;top:356.84px;font-size:12px;color:#f0f0f0;transform:scaleX(0.95);transform-origin:0 0">Defa...</div><div class="r" style="left:1159px;top:363px;width:22px;height:1px;background:#e8e8e8;"></div><div class="t" style="left:1187px;top:356.84px;font-size:12px;color:#f0f0f0;transform:scaleX(0.95);transform-origin:0 0">Defa...</div><div class="t" style="left:1229px;top:356.84px;font-size:12px;color:#f0f0f0;">0</div><div class="t" style="left:1284px;top:356.84px;font-size:12px;color:#f0f0f0;">0</div><svg class="r" style="left:1337px;top:357px;" width="13" height="13" viewBox="0 0 13 13"><path d="M0.5,4 V0.5 H4 M8,0.5 H11.5 V4 M0.5,8 V11.5 H4" stroke="#d8d8d8" fill="none"/><rect x="3" y="3" width="6" height="6" fill="#7a8290" stroke="#ccc" stroke-width="0.7"/><circle cx="9.5" cy="9.5" r="2.3" fill="#f5c66a"/><circle cx="9.5" cy="9.5" r="3.6" stroke="#f5c66a" stroke-dasharray="0.8,1.2" fill="none" stroke-width="0.8"/></svg><svg class="r" style="left:681px;top:375px;" width="14" height="13" viewBox="0 0 14 13"><path d="M0.5,4 V0.5 H4 M8,0.5 H11.5 V4 M0.5,8 V11.5 H4" stroke="#d8d8d8" fill="none"/><rect x="3" y="3" width="6" height="6" stroke="#ccc" fill="none"/><path d="M5,13 L8,10 H14 L11,13Z" fill="#7cc4f4"/></svg><div class="t" style="left:700px;top:374.84px;font-size:12px;color:#f0f0f0;">janelas</div><svg class="r" style="left:776px;top:375px;" width="10" height="13" viewBox="0 0 10 13"><circle cx="5" cy="5" r="4.8" fill="#f5c66a"/><rect x="3" y="10" width="4" height="3" fill="#eee"/></svg><svg class="r" style="left:791px;top:374px;" width="14" height="14" viewBox="0 0 14 14"><circle cx="7" cy="7" r="3.5" fill="#f5c66a"/><path d="M7,0 V2 M7,12 V14 M0,7 H2 M12,7 H14 M2,2 L3.4,3.4 M10.6,10.6 L12,12 M12,2 L10.6,3.4 M3.4,10.6 L2,12" stroke="#f5c66a" stroke-width="1.1"/></svg><svg class="r" style="left:811px;top:375px;" width="13" height="13" viewBox="0 0 13 13"><path d="M0.5,4 V0.5 H4 M8,0.5 H11.5 V4 M0.5,8 V11.5 H4" stroke="#d8d8d8" fill="none"/><rect x="3" y="3" width="6" height="6" fill="#7a8290" stroke="#ccc" stroke-width="0.7"/><circle cx="9.5" cy="9.5" r="2.3" fill="#f5c66a"/><circle cx="9.5" cy="9.5" r="3.6" stroke="#f5c66a" stroke-dasharray="0.8,1.2" fill="none" stroke-width="0.8"/></svg><svg class="r" style="left:828px;top:374px;" width="12" height="13" viewBox="0 0 12 13"><rect x="0" y="6" width="8.5" height="7" fill="#f5c66a"/><path d="M5.5,6 V3.2 A2.7,2.7 0 0 1 11,3.2 V4.5" stroke="#f5c66a" stroke-width="1.6" fill="none"/><rect x="3.5" y="8.5" width="1.5" height="2.5" fill="#3b4453"/></svg><svg class="r" style="left:849px;top:375px;" width="14" height="14" viewBox="0 0 14 14"><rect x="3" y="0" width="7" height="4" fill="#e8e8e8"/><rect x="0" y="4" width="13" height="6" rx="1" fill="#e8e8e8"/><rect x="2.5" y="8" width="8" height="5" fill="#e8e8e8" stroke="#3b4453" stroke-width="0.8"/><rect x="3.5" y="10.5" width="6" height="2" fill="#5ab4ea"/><circle cx="10.5" cy="10.5" r="3.5" fill="#e84040"/><rect x="8.5" y="10" width="4" height="1.2" fill="#fff"/></svg><div class="r" style="left:869px;top:375px;width:12px;height:12px;background:#ff8000;border:1px solid #c8c8c8"></div><div class="t" style="left:885px;top:374.84px;font-size:12px;color:#f0f0f0;">30</div><div class="r" style="left:917px;top:375px;width:12px;height:12px;background:#ff8000;border:1px solid #c8c8c8"></div><div class="t" style="left:933px;top:374.84px;font-size:12px;color:#f0f0f0;">30</div><div class="t" style="left:965px;top:374.84px;font-size:12px;color:#f0f0f0;">Continu...</div><div class="t" style="left:1029px;top:374.84px;font-size:12px;color:#f0f0f0;">Continu...</div><div class="r" style="left:1091px;top:381px;width:22px;height:1px;background:#e8e8e8;"></div><div class="t" style="left:1119px;top:374.84px;font-size:12px;color:#f0f0f0;transform:scaleX(0.95);transform-origin:0 0">Defa...</div><div class="r" style="left:1159px;top:381px;width:22px;height:1px;background:#e8e8e8;"></div><div class="t" style="left:1187px;top:374.84px;font-size:12px;color:#f0f0f0;transform:scaleX(0.95);transform-origin:0 0">Defa...</div><div class="t" style="left:1229px;top:374.84px;font-size:12px;color:#f0f0f0;">0</div><div class="t" style="left:1284px;top:374.84px;font-size:12px;color:#f0f0f0;">0</div><svg class="r" style="left:1337px;top:375px;" width="13" height="13" viewBox="0 0 13 13"><path d="M0.5,4 V0.5 H4 M8,0.5 H11.5 V4 M0.5,8 V11.5 H4" stroke="#d8d8d8" fill="none"/><rect x="3" y="3" width="6" height="6" fill="#7a8290" stroke="#ccc" stroke-width="0.7"/><circle cx="9.5" cy="9.5" r="2.3" fill="#f5c66a"/><circle cx="9.5" cy="9.5" r="3.6" stroke="#f5c66a" stroke-dasharray="0.8,1.2" fill="none" stroke-width="0.8"/></svg><svg class="r" style="left:681px;top:393px;" width="14" height="13" viewBox="0 0 14 13"><path d="M0.5,4 V0.5 H4 M8,0.5 H11.5 V4 M0.5,8 V11.5 H4" stroke="#d8d8d8" fill="none"/><rect x="3" y="3" width="6" height="6" stroke="#ccc" fill="none"/><path d="M5,13 L8,10 H14 L11,13Z" fill="#7cc4f4"/></svg><div class="t" style="left:700px;top:392.84px;font-size:12px;color:#f0f0f0;">legendas</div><svg class="r" style="left:776px;top:393px;" width="10" height="13" viewBox="0 0 10 13"><circle cx="5" cy="5" r="4.8" fill="#f5c66a"/><rect x="3" y="10" width="4" height="3" fill="#eee"/></svg><svg class="r" style="left:791px;top:392px;" width="14" height="14" viewBox="0 0 14 14"><circle cx="7" cy="7" r="3.5" fill="#f5c66a"/><path d="M7,0 V2 M7,12 V14 M0,7 H2 M12,7 H14 M2,2 L3.4,3.4 M10.6,10.6 L12,12 M12,2 L10.6,3.4 M3.4,10.6 L2,12" stroke="#f5c66a" stroke-width="1.1"/></svg><svg class="r" style="left:811px;top:393px;" width="13" height="13" viewBox="0 0 13 13"><path d="M0.5,4 V0.5 H4 M8,0.5 H11.5 V4 M0.5,8 V11.5 H4" stroke="#d8d8d8" fill="none"/><rect x="3" y="3" width="6" height="6" fill="#7a8290" stroke="#ccc" stroke-width="0.7"/><circle cx="9.5" cy="9.5" r="2.3" fill="#f5c66a"/><circle cx="9.5" cy="9.5" r="3.6" stroke="#f5c66a" stroke-dasharray="0.8,1.2" fill="none" stroke-width="0.8"/></svg><svg class="r" style="left:828px;top:392px;" width="12" height="13" viewBox="0 0 12 13"><rect x="0" y="6" width="8.5" height="7" fill="#f5c66a"/><path d="M5.5,6 V3.2 A2.7,2.7 0 0 1 11,3.2 V4.5" stroke="#f5c66a" stroke-width="1.6" fill="none"/><rect x="3.5" y="8.5" width="1.5" height="2.5" fill="#3b4453"/></svg><svg class="r" style="left:849px;top:393px;" width="14" height="14" viewBox="0 0 14 14"><rect x="3" y="0" width="7" height="4" fill="#e8e8e8"/><rect x="0" y="4" width="13" height="6" rx="1" fill="#e8e8e8"/><rect x="2.5" y="8" width="8" height="5" fill="#e8e8e8" stroke="#3b4453" stroke-width="0.8"/><rect x="3.5" y="10.5" width="6" height="2" fill="#5ab4ea"/></svg><div class="r" style="left:869px;top:393px;width:12px;height:12px;background:#3f7f6f;border:1px solid #c8c8c8"></div><div class="t" style="left:885px;top:392.84px;font-size:12px;color:#f0f0f0;">125</div><div class="r" style="left:917px;top:393px;width:12px;height:12px;background:#3f7f6f;border:1px solid #c8c8c8"></div><div class="t" style="left:933px;top:392.84px;font-size:12px;color:#f0f0f0;">125</div><div class="t" style="left:965px;top:392.84px;font-size:12px;color:#f0f0f0;">Continu...</div><div class="t" style="left:1029px;top:392.84px;font-size:12px;color:#f0f0f0;">Continu...</div><div class="r" style="left:1091px;top:399px;width:22px;height:1px;background:#e8e8e8;"></div><div class="t" style="left:1119px;top:392.84px;font-size:12px;color:#f0f0f0;transform:scaleX(0.95);transform-origin:0 0">Defa...</div><div class="r" style="left:1159px;top:399px;width:22px;height:1px;background:#e8e8e8;"></div><div class="t" style="left:1187px;top:392.84px;font-size:12px;color:#f0f0f0;transform:scaleX(0.95);transform-origin:0 0">Defa...</div><div class="t" style="left:1229px;top:392.84px;font-size:12px;color:#f0f0f0;">0</div><div class="t" style="left:1284px;top:392.84px;font-size:12px;color:#f0f0f0;">0</div><svg class="r" style="left:1337px;top:393px;" width="13" height="13" viewBox="0 0 13 13"><path d="M0.5,4 V0.5 H4 M8,0.5 H11.5 V4 M0.5,8 V11.5 H4" stroke="#d8d8d8" fill="none"/><rect x="3" y="3" width="6" height="6" fill="#7a8290" stroke="#ccc" stroke-width="0.7"/><circle cx="9.5" cy="9.5" r="2.3" fill="#f5c66a"/><circle cx="9.5" cy="9.5" r="3.6" stroke="#f5c66a" stroke-dasharray="0.8,1.2" fill="none" stroke-width="0.8"/></svg><svg class="r" style="left:681px;top:415px;" width="14" height="7" viewBox="0 0 14 7"><path d="M3,0 H14 L11,7 H0Z" fill="#7cc4f4"/></svg><div class="t" style="left:700px;top:410.84px;font-size:12px;color:#f0f0f0;">pentagno</div><svg class="r" style="left:776px;top:411px;" width="10" height="13" viewBox="0 0 10 13"><circle cx="5" cy="5" r="4.8" fill="#f5c66a"/><rect x="3" y="10" width="4" height="3" fill="#eee"/></svg><svg class="r" style="left:791px;top:410px;" width="14" height="14" viewBox="0 0 14 14"><circle cx="7" cy="7" r="3.5" fill="#f5c66a"/><path d="M7,0 V2 M7,12 V14 M0,7 H2 M12,7 H14 M2,2 L3.4,3.4 M10.6,10.6 L12,12 M12,2 L10.6,3.4 M3.4,10.6 L2,12" stroke="#f5c66a" stroke-width="1.1"/></svg><svg class="r" style="left:811px;top:411px;" width="13" height="13" viewBox="0 0 13 13"><path d="M0.5,4 V0.5 H4 M8,0.5 H11.5 V4 M0.5,8 V11.5 H4" stroke="#d8d8d8" fill="none"/><rect x="3" y="3" width="6" height="6" fill="#7a8290" stroke="#ccc" stroke-width="0.7"/><circle cx="9.5" cy="9.5" r="2.3" fill="#f5c66a"/><circle cx="9.5" cy="9.5" r="3.6" stroke="#f5c66a" stroke-dasharray="0.8,1.2" fill="none" stroke-width="0.8"/></svg><svg class="r" style="left:828px;top:410px;" width="12" height="13" viewBox="0 0 12 13"><rect x="0" y="6" width="8.5" height="7" fill="#f5c66a"/><path d="M5.5,6 V3.2 A2.7,2.7 0 0 1 11,3.2 V4.5" stroke="#f5c66a" stroke-width="1.6" fill="none"/><rect x="3.5" y="8.5" width="1.5" height="2.5" fill="#3b4453"/></svg><svg class="r" style="left:849px;top:411px;" width="14" height="14" viewBox="0 0 14 14"><rect x="3" y="0" width="7" height="4" fill="#e8e8e8"/><rect x="0" y="4" width="13" height="6" rx="1" fill="#e8e8e8"/><rect x="2.5" y="8" width="8" height="5" fill="#e8e8e8" stroke="#3b4453" stroke-width="0.8"/><rect x="3.5" y="10.5" width="6" height="2" fill="#5ab4ea"/></svg><div class="r" style="left:869px;top:411px;width:12px;height:12px;background:#00ffff;border:1px solid #c8c8c8"></div><div class="t" style="left:885px;top:410.84px;font-size:12px;color:#f0f0f0;">cyan</div><div class="r" style="left:917px;top:411px;width:12px;height:12px;background:#00ffff;border:1px solid #c8c8c8"></div><div class="t" style="left:933px;top:410.84px;font-size:12px;color:#f0f0f0;">cyan</div><div class="t" style="left:965px;top:410.84px;font-size:12px;color:#f0f0f0;">Continu...</div><div class="t" style="left:1029px;top:410.84px;font-size:12px;color:#f0f0f0;">Continu...</div><div class="r" style="left:1091px;top:417px;width:22px;height:1px;background:#e8e8e8;"></div><div class="t" style="left:1119px;top:410.84px;font-size:12px;color:#f0f0f0;transform:scaleX(0.95);transform-origin:0 0">Defa...</div><div class="r" style="left:1159px;top:417px;width:22px;height:1px;background:#e8e8e8;"></div><div class="t" style="left:1187px;top:410.84px;font-size:12px;color:#f0f0f0;transform:scaleX(0.95);transform-origin:0 0">Defa...</div><div class="t" style="left:1229px;top:410.84px;font-size:12px;color:#f0f0f0;">0</div><div class="t" style="left:1284px;top:410.84px;font-size:12px;color:#f0f0f0;">0</div><svg class="r" style="left:1337px;top:411px;" width="13" height="13" viewBox="0 0 13 13"><path d="M0.5,4 V0.5 H4 M8,0.5 H11.5 V4 M0.5,8 V11.5 H4" stroke="#d8d8d8" fill="none"/><rect x="3" y="3" width="6" height="6" fill="#7a8290" stroke="#ccc" stroke-width="0.7"/><circle cx="9.5" cy="9.5" r="2.3" fill="#f5c66a"/><circle cx="9.5" cy="9.5" r="3.6" stroke="#f5c66a" stroke-dasharray="0.8,1.2" fill="none" stroke-width="0.8"/></svg><svg class="r" style="left:681px;top:433px;" width="14" height="7" viewBox="0 0 14 7"><path d="M3,0 H14 L11,7 H0Z" fill="#7cc4f4"/></svg><div class="t" style="left:700px;top:428.84px;font-size:12px;color:#f0f0f0;">quadrado</div><svg class="r" style="left:776px;top:429px;" width="10" height="13" viewBox="0 0 10 13"><circle cx="5" cy="5" r="4.8" fill="#f5c66a"/><rect x="3" y="10" width="4" height="3" fill="#eee"/></svg><svg class="r" style="left:791px;top:428px;" width="14" height="14" viewBox="0 0 14 14"><circle cx="7" cy="7" r="3.5" fill="#f5c66a"/><path d="M7,0 V2 M7,12 V14 M0,7 H2 M12,7 H14 M2,2 L3.4,3.4 M10.6,10.6 L12,12 M12,2 L10.6,3.4 M3.4,10.6 L2,12" stroke="#f5c66a" stroke-width="1.1"/></svg><svg class="r" style="left:811px;top:429px;" width="13" height="13" viewBox="0 0 13 13"><path d="M0.5,4 V0.5 H4 M8,0.5 H11.5 V4 M0.5,8 V11.5 H4" stroke="#d8d8d8" fill="none"/><rect x="3" y="3" width="6" height="6" fill="#7a8290" stroke="#ccc" stroke-width="0.7"/><circle cx="9.5" cy="9.5" r="2.3" fill="#f5c66a"/><circle cx="9.5" cy="9.5" r="3.6" stroke="#f5c66a" stroke-dasharray="0.8,1.2" fill="none" stroke-width="0.8"/></svg><svg class="r" style="left:828px;top:428px;" width="12" height="13" viewBox="0 0 12 13"><rect x="0" y="6" width="8.5" height="7" fill="#f5c66a"/><path d="M5.5,6 V3.2 A2.7,2.7 0 0 1 11,3.2 V4.5" stroke="#f5c66a" stroke-width="1.6" fill="none"/><rect x="3.5" y="8.5" width="1.5" height="2.5" fill="#3b4453"/></svg><svg class="r" style="left:849px;top:429px;" width="14" height="14" viewBox="0 0 14 14"><rect x="3" y="0" width="7" height="4" fill="#e8e8e8"/><rect x="0" y="4" width="13" height="6" rx="1" fill="#e8e8e8"/><rect x="2.5" y="8" width="8" height="5" fill="#e8e8e8" stroke="#3b4453" stroke-width="0.8"/><rect x="3.5" y="10.5" width="6" height="2" fill="#5ab4ea"/></svg><div class="r" style="left:869px;top:429px;width:12px;height:12px;background:#ff0000;border:1px solid #c8c8c8"></div><div class="t" style="left:885px;top:428.84px;font-size:12px;color:#f0f0f0;">red</div><div class="r" style="left:917px;top:429px;width:12px;height:12px;background:#ff0000;border:1px solid #c8c8c8"></div><div class="t" style="left:933px;top:428.84px;font-size:12px;color:#f0f0f0;">red</div><div class="t" style="left:965px;top:428.84px;font-size:12px;color:#f0f0f0;">Continu...</div><div class="t" style="left:1029px;top:428.84px;font-size:12px;color:#f0f0f0;">Continu...</div><div class="r" style="left:1091px;top:435px;width:22px;height:1px;background:#e8e8e8;"></div><div class="t" style="left:1119px;top:428.84px;font-size:12px;color:#f0f0f0;transform:scaleX(0.95);transform-origin:0 0">Defa...</div><div class="r" style="left:1159px;top:435px;width:22px;height:1px;background:#e8e8e8;"></div><div class="t" style="left:1187px;top:428.84px;font-size:12px;color:#f0f0f0;transform:scaleX(0.95);transform-origin:0 0">Defa...</div><div class="t" style="left:1229px;top:428.84px;font-size:12px;color:#f0f0f0;">0</div><div class="t" style="left:1284px;top:428.84px;font-size:12px;color:#f0f0f0;">0</div><svg class="r" style="left:1337px;top:429px;" width="13" height="13" viewBox="0 0 13 13"><path d="M0.5,4 V0.5 H4 M8,0.5 H11.5 V4 M0.5,8 V11.5 H4" stroke="#d8d8d8" fill="none"/><rect x="3" y="3" width="6" height="6" fill="#7a8290" stroke="#ccc" stroke-width="0.7"/><circle cx="9.5" cy="9.5" r="2.3" fill="#f5c66a"/><circle cx="9.5" cy="9.5" r="3.6" stroke="#f5c66a" stroke-dasharray="0.8,1.2" fill="none" stroke-width="0.8"/></svg><svg class="r" style="left:681px;top:451px;" width="14" height="7" viewBox="0 0 14 7"><path d="M3,0 H14 L11,7 H0Z" fill="#7cc4f4"/></svg><div class="t" style="left:700px;top:446.84px;font-size:12px;color:#f0f0f0;">ret_ouro</div><svg class="r" style="left:776px;top:447px;" width="10" height="13" viewBox="0 0 10 13"><circle cx="5" cy="5" r="4.8" fill="#f5c66a"/><rect x="3" y="10" width="4" height="3" fill="#eee"/></svg><svg class="r" style="left:791px;top:446px;" width="14" height="14" viewBox="0 0 14 14"><circle cx="7" cy="7" r="3.5" fill="#f5c66a"/><path d="M7,0 V2 M7,12 V14 M0,7 H2 M12,7 H14 M2,2 L3.4,3.4 M10.6,10.6 L12,12 M12,2 L10.6,3.4 M3.4,10.6 L2,12" stroke="#f5c66a" stroke-width="1.1"/></svg><svg class="r" style="left:811px;top:447px;" width="13" height="13" viewBox="0 0 13 13"><path d="M0.5,4 V0.5 H4 M8,0.5 H11.5 V4 M0.5,8 V11.5 H4" stroke="#d8d8d8" fill="none"/><rect x="3" y="3" width="6" height="6" fill="#7a8290" stroke="#ccc" stroke-width="0.7"/><circle cx="9.5" cy="9.5" r="2.3" fill="#f5c66a"/><circle cx="9.5" cy="9.5" r="3.6" stroke="#f5c66a" stroke-dasharray="0.8,1.2" fill="none" stroke-width="0.8"/></svg><svg class="r" style="left:828px;top:446px;" width="12" height="13" viewBox="0 0 12 13"><rect x="0" y="6" width="8.5" height="7" fill="#f5c66a"/><path d="M5.5,6 V3.2 A2.7,2.7 0 0 1 11,3.2 V4.5" stroke="#f5c66a" stroke-width="1.6" fill="none"/><rect x="3.5" y="8.5" width="1.5" height="2.5" fill="#3b4453"/></svg><svg class="r" style="left:849px;top:447px;" width="14" height="14" viewBox="0 0 14 14"><rect x="3" y="0" width="7" height="4" fill="#e8e8e8"/><rect x="0" y="4" width="13" height="6" rx="1" fill="#e8e8e8"/><rect x="2.5" y="8" width="8" height="5" fill="#e8e8e8" stroke="#3b4453" stroke-width="0.8"/><rect x="3.5" y="10.5" width="6" height="2" fill="#5ab4ea"/></svg><div class="r" style="left:869px;top:447px;width:12px;height:12px;background:#ff00ff;border:1px solid #c8c8c8"></div><div class="t" style="left:885px;top:446.84px;font-size:12px;color:#f0f0f0;">ma...</div><div class="r" style="left:917px;top:447px;width:12px;height:12px;background:#ff00ff;border:1px solid #c8c8c8"></div><div class="t" style="left:933px;top:446.84px;font-size:12px;color:#f0f0f0;">ma...</div><div class="t" style="left:965px;top:446.84px;font-size:12px;color:#f0f0f0;">Continu...</div><div class="t" style="left:1029px;top:446.84px;font-size:12px;color:#f0f0f0;">Continu...</div><div class="r" style="left:1091px;top:453px;width:22px;height:1px;background:#e8e8e8;"></div><div class="t" style="left:1119px;top:446.84px;font-size:12px;color:#f0f0f0;transform:scaleX(0.95);transform-origin:0 0">Defa...</div><div class="r" style="left:1159px;top:453px;width:22px;height:1px;background:#e8e8e8;"></div><div class="t" style="left:1187px;top:446.84px;font-size:12px;color:#f0f0f0;transform:scaleX(0.95);transform-origin:0 0">Defa...</div><div class="t" style="left:1229px;top:446.84px;font-size:12px;color:#f0f0f0;">0</div><div class="t" style="left:1284px;top:446.84px;font-size:12px;color:#f0f0f0;">0</div><svg class="r" style="left:1337px;top:447px;" width="13" height="13" viewBox="0 0 13 13"><path d="M0.5,4 V0.5 H4 M8,0.5 H11.5 V4 M0.5,8 V11.5 H4" stroke="#d8d8d8" fill="none"/><rect x="3" y="3" width="6" height="6" fill="#7a8290" stroke="#ccc" stroke-width="0.7"/><circle cx="9.5" cy="9.5" r="2.3" fill="#f5c66a"/><circle cx="9.5" cy="9.5" r="3.6" stroke="#f5c66a" stroke-dasharray="0.8,1.2" fill="none" stroke-width="0.8"/></svg><svg class="r" style="left:681px;top:469px;" width="14" height="7" viewBox="0 0 14 7"><path d="M3,0 H14 L11,7 H0Z" fill="#7cc4f4"/></svg><div class="t" style="left:700px;top:464.84px;font-size:12px;color:#f0f0f0;">ret_r2</div><svg class="r" style="left:776px;top:465px;" width="10" height="13" viewBox="0 0 10 13"><circle cx="5" cy="5" r="4.8" fill="#f5c66a"/><rect x="3" y="10" width="4" height="3" fill="#eee"/></svg><svg class="r" style="left:791px;top:464px;" width="14" height="14" viewBox="0 0 14 14"><circle cx="7" cy="7" r="3.5" fill="#f5c66a"/><path d="M7,0 V2 M7,12 V14 M0,7 H2 M12,7 H14 M2,2 L3.4,3.4 M10.6,10.6 L12,12 M12,2 L10.6,3.4 M3.4,10.6 L2,12" stroke="#f5c66a" stroke-width="1.1"/></svg><svg class="r" style="left:811px;top:465px;" width="13" height="13" viewBox="0 0 13 13"><path d="M0.5,4 V0.5 H4 M8,0.5 H11.5 V4 M0.5,8 V11.5 H4" stroke="#d8d8d8" fill="none"/><rect x="3" y="3" width="6" height="6" fill="#7a8290" stroke="#ccc" stroke-width="0.7"/><circle cx="9.5" cy="9.5" r="2.3" fill="#f5c66a"/><circle cx="9.5" cy="9.5" r="3.6" stroke="#f5c66a" stroke-dasharray="0.8,1.2" fill="none" stroke-width="0.8"/></svg><svg class="r" style="left:828px;top:464px;" width="12" height="13" viewBox="0 0 12 13"><rect x="0" y="6" width="8.5" height="7" fill="#f5c66a"/><path d="M5.5,6 V3.2 A2.7,2.7 0 0 1 11,3.2 V4.5" stroke="#f5c66a" stroke-width="1.6" fill="none"/><rect x="3.5" y="8.5" width="1.5" height="2.5" fill="#3b4453"/></svg><svg class="r" style="left:849px;top:465px;" width="14" height="14" viewBox="0 0 14 14"><rect x="3" y="0" width="7" height="4" fill="#e8e8e8"/><rect x="0" y="4" width="13" height="6" rx="1" fill="#e8e8e8"/><rect x="2.5" y="8" width="8" height="5" fill="#e8e8e8" stroke="#3b4453" stroke-width="0.8"/><rect x="3.5" y="10.5" width="6" height="2" fill="#5ab4ea"/></svg><div class="r" style="left:869px;top:465px;width:12px;height:12px;background:#0000ff;border:1px solid #c8c8c8"></div><div class="t" style="left:885px;top:464.84px;font-size:12px;color:#f0f0f0;">blue</div><div class="r" style="left:917px;top:465px;width:12px;height:12px;background:#0000ff;border:1px solid #c8c8c8"></div><div class="t" style="left:933px;top:464.84px;font-size:12px;color:#f0f0f0;">blue</div><div class="t" style="left:965px;top:464.84px;font-size:12px;color:#f0f0f0;">Continu...</div><div class="t" style="left:1029px;top:464.84px;font-size:12px;color:#f0f0f0;">Continu...</div><div class="r" style="left:1091px;top:471px;width:22px;height:1px;background:#e8e8e8;"></div><div class="t" style="left:1119px;top:464.84px;font-size:12px;color:#f0f0f0;transform:scaleX(0.95);transform-origin:0 0">Defa...</div><div class="r" style="left:1159px;top:471px;width:22px;height:1px;background:#e8e8e8;"></div><div class="t" style="left:1187px;top:464.84px;font-size:12px;color:#f0f0f0;transform:scaleX(0.95);transform-origin:0 0">Defa...</div><div class="t" style="left:1229px;top:464.84px;font-size:12px;color:#f0f0f0;">0</div><div class="t" style="left:1284px;top:464.84px;font-size:12px;color:#f0f0f0;">0</div><svg class="r" style="left:1337px;top:465px;" width="13" height="13" viewBox="0 0 13 13"><path d="M0.5,4 V0.5 H4 M8,0.5 H11.5 V4 M0.5,8 V11.5 H4" stroke="#d8d8d8" fill="none"/><rect x="3" y="3" width="6" height="6" fill="#7a8290" stroke="#ccc" stroke-width="0.7"/><circle cx="9.5" cy="9.5" r="2.3" fill="#f5c66a"/><circle cx="9.5" cy="9.5" r="3.6" stroke="#f5c66a" stroke-dasharray="0.8,1.2" fill="none" stroke-width="0.8"/></svg><svg class="r" style="left:681px;top:487px;" width="14" height="7" viewBox="0 0 14 7"><path d="M3,0 H14 L11,7 H0Z" fill="#7cc4f4"/></svg><div class="t" style="left:700px;top:482.84px;font-size:12px;color:#f0f0f0;">triângulo</div><svg class="r" style="left:776px;top:483px;" width="10" height="13" viewBox="0 0 10 13"><circle cx="5" cy="5" r="4.8" fill="#f5c66a"/><rect x="3" y="10" width="4" height="3" fill="#eee"/></svg><svg class="r" style="left:791px;top:482px;" width="14" height="14" viewBox="0 0 14 14"><circle cx="7" cy="7" r="3.5" fill="#f5c66a"/><path d="M7,0 V2 M7,12 V14 M0,7 H2 M12,7 H14 M2,2 L3.4,3.4 M10.6,10.6 L12,12 M12,2 L10.6,3.4 M3.4,10.6 L2,12" stroke="#f5c66a" stroke-width="1.1"/></svg><svg class="r" style="left:811px;top:483px;" width="13" height="13" viewBox="0 0 13 13"><path d="M0.5,4 V0.5 H4 M8,0.5 H11.5 V4 M0.5,8 V11.5 H4" stroke="#d8d8d8" fill="none"/><rect x="3" y="3" width="6" height="6" fill="#7a8290" stroke="#ccc" stroke-width="0.7"/><circle cx="9.5" cy="9.5" r="2.3" fill="#f5c66a"/><circle cx="9.5" cy="9.5" r="3.6" stroke="#f5c66a" stroke-dasharray="0.8,1.2" fill="none" stroke-width="0.8"/></svg><svg class="r" style="left:828px;top:482px;" width="12" height="13" viewBox="0 0 12 13"><rect x="0" y="6" width="8.5" height="7" fill="#f5c66a"/><path d="M5.5,6 V3.2 A2.7,2.7 0 0 1 11,3.2 V4.5" stroke="#f5c66a" stroke-width="1.6" fill="none"/><rect x="3.5" y="8.5" width="1.5" height="2.5" fill="#3b4453"/></svg><svg class="r" style="left:849px;top:483px;" width="14" height="14" viewBox="0 0 14 14"><rect x="3" y="0" width="7" height="4" fill="#e8e8e8"/><rect x="0" y="4" width="13" height="6" rx="1" fill="#e8e8e8"/><rect x="2.5" y="8" width="8" height="5" fill="#e8e8e8" stroke="#3b4453" stroke-width="0.8"/><rect x="3.5" y="10.5" width="6" height="2" fill="#5ab4ea"/></svg><div class="r" style="left:869px;top:483px;width:12px;height:12px;background:#00ff00;border:1px solid #c8c8c8"></div><div class="t" style="left:885px;top:482.84px;font-size:12px;color:#f0f0f0;">gr...</div><div class="r" style="left:917px;top:483px;width:12px;height:12px;background:#00ff00;border:1px solid #c8c8c8"></div><div class="t" style="left:933px;top:482.84px;font-size:12px;color:#f0f0f0;">gr...</div><div class="t" style="left:965px;top:482.84px;font-size:12px;color:#f0f0f0;">Continu...</div><div class="t" style="left:1029px;top:482.84px;font-size:12px;color:#f0f0f0;">Continu...</div><div class="r" style="left:1091px;top:489px;width:22px;height:1px;background:#e8e8e8;"></div><div class="t" style="left:1119px;top:482.84px;font-size:12px;color:#f0f0f0;transform:scaleX(0.95);transform-origin:0 0">Defa...</div><div class="r" style="left:1159px;top:489px;width:22px;height:1px;background:#e8e8e8;"></div><div class="t" style="left:1187px;top:482.84px;font-size:12px;color:#f0f0f0;transform:scaleX(0.95);transform-origin:0 0">Defa...</div><div class="t" style="left:1229px;top:482.84px;font-size:12px;color:#f0f0f0;">0</div><div class="t" style="left:1284px;top:482.84px;font-size:12px;color:#f0f0f0;">0</div><svg class="r" style="left:1337px;top:483px;" width="13" height="13" viewBox="0 0 13 13"><path d="M0.5,4 V0.5 H4 M8,0.5 H11.5 V4 M0.5,8 V11.5 H4" stroke="#d8d8d8" fill="none"/><rect x="3" y="3" width="6" height="6" fill="#7a8290" stroke="#ccc" stroke-width="0.7"/><circle cx="9.5" cy="9.5" r="2.3" fill="#f5c66a"/><circle cx="9.5" cy="9.5" r="3.6" stroke="#f5c66a" stroke-dasharray="0.8,1.2" fill="none" stroke-width="0.8"/></svg><div class="r" style="left:679px;top:597px;width:790px;height:17px;background:#f0f0f0;"></div><div class="r" style="left:696px;top:597px;width:656px;height:17px;background:#cdcdcd;"></div><svg class="r" style="left:683px;top:601px;" width="8" height="10" viewBox="0 0 8 10"><path d="M6,1 L2,5 L6,9" stroke="#555" stroke-width="1.6" fill="none"/></svg><svg class="r" style="left:1456px;top:601px;" width="8" height="10" viewBox="0 0 8 10"><path d="M2,1 L6,5 L2,9" stroke="#555" stroke-width="1.6" fill="none"/></svg><div class="t" style="left:584px;top:632.84px;font-size:12px;color:#f0f0f0;transform:scaleX(0.962);transform-origin:0 0">All: 12 layers displayed of 12 total layers</div>
<div class="r" style="left:1882px;top:201px;width:36px;height:136px;background:#9c9c9c;border:2px solid #727272;border-radius:6px;box-shadow:inset 0 0 0 1px #aaaaaa"></div>
<svg class="r" style="left:1883px;top:202px;" width="34" height="134" viewBox="0 0 34 134"><circle cx="27" cy="6.3" r="3.6" fill="#adadad" stroke="#888" stroke-width="0.7"/><path d="M25.3,4.6 L28.7,8 M28.7,4.6 L25.3,8" stroke="#7c7c7c" stroke-width="1"/><path d="M3,11.5 H31" stroke="#8a8a8a" stroke-width="0.8"/><path d="M24,22 H14 A9,9 0 0 0 14,40 H24 Z" stroke="#868686" fill="none" stroke-width="1.3"/><circle cx="15" cy="31" r="5" stroke="#868686" fill="none" stroke-width="1.3"/><path d="M11,35 L7,39" stroke="#868686" stroke-width="1.2"/><text x="16" y="43" font-family="Liberation Sans" font-size="10" font-weight="bold" fill="#7f96b8">2D</text><path d="M4,47.5 H30" stroke="#8a8a8a" stroke-width="0.6"/><path d="M11,75 C7,70 4,66 4,64 C5,62 7,62 9,65 L10,66 V56 C10,54 13,54 13,56 V63 V54 C13,52 16,52 16,54 V63 V55 C16,53 19,53 19,55 V63 V57 C19,55 22,55 22,57 V66 C22,71 20,75 16,75Z" stroke="#868686" fill="none" stroke-width="1.1"/><path d="M5,80 L19,94 M5,80 H9.5 M5,80 V84.5 M5,96 L21,80 M5,96 V91.5 M5,96 H9.5 M21,80 H16.5 M21,80 V84.5" stroke="#868686" fill="none" stroke-width="1.1"/><circle cx="20" cy="97" r="5.3" stroke="#868686" fill="#a2a2a2" stroke-width="1.3"/><path d="M24,101 L27.5,104.5" stroke="#868686" stroke-width="2.2"/><path d="M14,111 H20 L17,114Z" fill="#868686"/><circle cx="27" cy="127" r="3.6" fill="#adadad" stroke="#888" stroke-width="0.7"/><path d="M24.5,127 H29.5" stroke="#7c7c7c" stroke-width="1"/></svg>
<div class="r" style="left:409px;top:944px;width:25px;height:62px;background:#3b4453;border-radius:4px 0 0 4px"></div>
<div class="r" style="left:434px;top:944px;width:1076px;height:41px;background:rgba(181,181,181,0.96);border-top:1px solid #4a5260;border-right:1px solid #4a5260"></div>
<div class="r" style="left:434px;top:985px;width:1076px;height:1px;background:#4a5260;"></div>
<div class="r" style="left:434px;top:986px;width:1076px;height:20px;background:rgba(220,220,220,0.97);border-right:1px solid #4a5260"></div>
<svg class="r" style="left:0px;top:944px;" width="1920" height="63" viewBox="0 0 1920 63"><path d="M745.5,0 V63 M1154.5,0 V63 M1439.5,0 V23.5 M1030.5,0 V23.5 H1439.5" stroke="#f0902c" stroke-width="1" fill="none" opacity="0.35"/><path d="M414.5,0 V63" stroke="#111" stroke-width="1"/></svg>
<svg class="r" style="left:413px;top:948px;" width="18" height="6" viewBox="0 0 18 6"><path d="M0,1 H17 M0,4.5 H17" stroke="#e0e0e0" stroke-width="2" stroke-dasharray="2,1"/></svg>
<svg class="r" style="left:416px;top:962px;" width="11" height="11" viewBox="0 0 11 11"><path d="M1,1 L10,10 M10,1 L1,10" stroke="#e0e0e0" stroke-width="1.8"/></svg>
<svg class="r" style="left:413px;top:984px;" width="17" height="17" viewBox="0 0 17 17"><path d="M2,15 L10,7" stroke="#c8c8c8" stroke-width="3" stroke-linecap="round"/><path d="M9,8 A4,4 0 1 1 15,3 L12,5 L13,6.5 L16,4.5 A4,4 0 0 1 9,8Z" fill="#c8c8c8"/></svg>
<div class="t" style="left:436px;top:957.48px;font-size:11.25px;color:#111;font-family:Liberation Mono,monospace">Command:</div>
<div class="t" style="left:436px;top:972.48px;font-size:11.25px;color:#111;font-family:Liberation Mono,monospace">Command:</div>
<svg class="r" style="left:437px;top:990px;" width="17" height="12" viewBox="0 0 17 12"><rect x="0.5" y="0.5" width="15" height="11" stroke="#555" fill="none"/><path d="M0.5,2 H15.5" stroke="#555" stroke-width="1.5"/><path d="M2,5 L5,7 L2,9 M6,9 H9" stroke="#555" stroke-width="0.9" fill="none"/></svg>
<svg class="r" style="left:456px;top:994px;" width="7" height="4" viewBox="0 0 7 4"><path d="M0,0 H7 L3.5,4Z" fill="#555"/></svg>
<div class="t" style="left:471px;top:992.48px;font-size:11.25px;color:#8a8a8a;font-family:Liberation Mono,monospace;font-style:italic">Type a command</div>
<svg class="r" style="left:1496px;top:994px;" width="9" height="5" viewBox="0 0 9 5"><path d="M0,5 L4.5,0 L9,5Z" fill="#888"/></svg>
<svg class="r" style="left:0px;top:1011px;" width="200" height="27" viewBox="0 0 200 27"><path d="M9,17 L16,2" stroke="#5a6270" stroke-width="1"/><path d="M66,24 L76,0 H113 L103,24Z" fill="#3b4453"/><path d="M144,17 L151,2" stroke="#5a6270" stroke-width="1"/></svg>
<div class="t" style="left:25px;top:1017.84px;font-size:12px;color:#f0f0f0;">Model</div>
<div class="t" style="left:82px;top:1017.84px;font-size:12px;color:#f0f0f0;">a3</div>
<svg class="r" style="left:121px;top:1017px;" width="12" height="12" viewBox="0 0 12 12"><path d="M6,0 V12 M0,6 H12" stroke="#eee" stroke-width="1.8"/></svg>
<div class="r" style="left:1408px;top:1013px;width:40px;height:24px;background:#3b4453;"></div>
<div class="r" style="left:1451px;top:1013px;width:104px;height:24px;background:#3b4453;"></div>
<div class="r" style="left:1556px;top:1013px;width:64px;height:24px;background:#3b4453;"></div>
<div class="r" style="left:1621px;top:1013px;width:24px;height:24px;background:#3b4453;"></div>
<div class="r" style="left:1648px;top:1013px;width:72px;height:24px;background:#3b4453;"></div>
<div class="r" style="left:1723px;top:1013px;width:39px;height:24px;background:#3b4453;"></div>
<div class="r" style="left:1764px;top:1013px;width:24px;height:24px;background:#3b4453;"></div>
<div class="r" style="left:1791px;top:1013px;width:24px;height:24px;background:#3b4453;"></div>
<div class="r" style="left:1818px;top:1013px;width:49px;height:24px;background:#3b4453;"></div>
<div class="r" style="left:1870px;top:1013px;width:48px;height:24px;background:#3b4453;"></div>
<div class="t" style="left:1411px;top:1018.84px;font-size:12px;color:#f0f0f0;transform:scaleX(0.87);transform-origin:0 0">PAPER</div>
<svg class="r" style="left:1454px;top:1017px;" width="17" height="16" viewBox="0 0 17 16"><path d="M1,0 V15 H16 M1,11 H5 V15" stroke="#e0e0e0" stroke-width="1.2" fill="none"/></svg>
<svg class="r" style="left:1478px;top:1016px;" width="18" height="16" viewBox="0 0 18 16"><circle cx="7" cy="9" r="6" stroke="#e0e0e0" fill="none" stroke-width="1.2"/><path d="M7,9 L14,1 M7,9 H16" stroke="#e0e0e0" stroke-width="1.2"/></svg>
<svg class="r" style="left:1503px;top:1023px;" width="8" height="5" viewBox="0 0 8 5"><path d="M0,0 H8 L4,5Z" fill="#e0e0e0"/></svg>
<svg class="r" style="left:1519px;top:1016px;" width="15" height="16" viewBox="0 0 15 16"><path d="M2,1 L13,15" stroke="#e04848" stroke-width="1.2"/><path d="M7.5,0 V16" stroke="#40c870" stroke-width="1.2"/><circle cx="7.5" cy="8" r="1.6" fill="#3b4453" stroke="#eee"/></svg>
<svg class="r" style="left:1543px;top:1023px;" width="8" height="5" viewBox="0 0 8 5"><path d="M0,0 H8 L4,5Z" fill="#e0e0e0"/></svg>
<svg class="r" style="left:1559px;top:1017px;" width="17" height="15" viewBox="0 0 17 15"><path d="M1,14 H16 M1,14 L13,3" stroke="#e0e0e0" stroke-width="1.2" fill="none"/><rect x="6" y="7" width="3" height="3" fill="#e0e0e0"/></svg>
<div class="r" style="left:1581px;top:1014px;width:22px;height:22px;background:#5b8bc0;"></div>
<svg class="r" style="left:1583px;top:1016px;" width="18" height="18" viewBox="0 0 18 18"><rect x="4" y="4" width="13" height="13" stroke="#f0f0f0" stroke-width="1.5" fill="none"/><rect x="1" y="1" width="5" height="5" stroke="#f0f0f0" stroke-width="1.2" fill="#5b8bc0"/></svg>
<svg class="r" style="left:1608px;top:1023px;" width="8" height="5" viewBox="0 0 8 5"><path d="M0,0 H8 L4,5Z" fill="#e0e0e0"/></svg>
<svg class="r" style="left:1625px;top:1016px;" width="17" height="17" viewBox="0 0 17 17"><rect x="0.6" y="0.6" width="15.8" height="15.8" stroke="#e0e0e0" fill="none" stroke-width="1.2"/><path d="M3,3h2.5v2.5h-2.5z M8,3h2.5v2.5h-2.5z M5.5,5.5h2.5v2.5h-2.5z M10.5,5.5h2.5v2.5h-2.5z M3,8h2.5v2.5h-2.5z M8,8h2.5v2.5h-2.5z M5.5,10.5h2.5v2.5h-2.5z M10.5,10.5h2.5v2.5h-2.5z" fill="#e0e0e0"/></svg>
<svg class="r" style="left:1651px;top:1016px;" width="18" height="18" viewBox="0 0 18 18"><path d="M1,5 V1 H5 M8,1 H12 M15,1 V5 M1,9 V13 M15,9 V13 M1,16 H5 M12,16 H16" stroke="#e0e0e0" stroke-width="1.1" stroke-dasharray="2,1" fill="none"/><rect x="6" y="7" width="6" height="6" stroke="#e0e0e0" fill="none"/><path d="M1,1 L6,6" stroke="#e0e0e0"/></svg>
<svg class="r" style="left:1675px;top:1016px;" width="18" height="18" viewBox="0 0 18 18"><path d="M7,1 L13,17 L7,13 L1,17Z" fill="#e0e0e0"/><circle cx="14" cy="4" r="3" stroke="#e0e0e0" fill="none"/></svg>
<svg class="r" style="left:1699px;top:1016px;" width="18" height="18" viewBox="0 0 18 18"><path d="M7,3 L13,17 L7,13 L1,17Z" fill="#e0e0e0"/><path d="M14,0 L11,5 H14 L12,9" stroke="#e0e0e0" stroke-width="1.2" fill="none"/></svg>
<svg class="r" style="left:1726px;top:1017px;" width="16" height="16" viewBox="0 0 16 16"><path d="M8,0.5 V15.5 M0.5,8 H15.5 M2.7,2.7 L13.3,13.3 M13.3,2.7 L2.7,13.3" stroke="#e0e0e0" stroke-width="3"/><circle cx="8" cy="8" r="5.3" fill="#e0e0e0"/><circle cx="8" cy="8" r="2.2" fill="#3b4453"/></svg>
<svg class="r" style="left:1751px;top:1023px;" width="8" height="5" viewBox="0 0 8 5"><path d="M0,0 H8 L4,5Z" fill="#e0e0e0"/></svg>
<svg class="r" style="left:1768px;top:1017px;" width="16" height="16" viewBox="0 0 16 16"><path d="M8,0 V16 M0,8 H16" stroke="#e8e8e8" stroke-width="1.6"/></svg>
<svg class="r" style="left:1794px;top:1016px;" width="18" height="18" viewBox="0 0 18 18"><rect x="1" y="1" width="6" height="6" stroke="#e0e0e0" fill="none" stroke-width="1.1"/><circle cx="13" cy="6" r="3.2" stroke="#e0e0e0" fill="none" stroke-width="1.1"/><path d="M6,17 L9,11 L12,17Z" stroke="#e0e0e0" fill="none" stroke-width="1.1"/></svg>
<svg class="r" style="left:1821px;top:1016px;" width="18" height="18" viewBox="0 0 18 18"><path d="M3,1 H12 L16,5 V15 H3Z" fill="#3a78c8"/><path d="M4,1 V9 M0,4 H9" stroke="#f0f0f0" stroke-width="1.1"/><circle cx="4" cy="4" r="1.5" fill="#f0f0f0"/><rect x="3" y="11" width="7" height="5" fill="#f0c040"/><path d="M9,12 L12,15.5 L17,9" stroke="#40c870" stroke-width="2" fill="none"/></svg>
<svg class="r" style="left:1843px;top:1016px;" width="18" height="18" viewBox="0 0 18 18"><path d="M1,5 V1 H5 M9,1 H13 V5 M1,9 V13 H5" stroke="#e0e0e0" stroke-width="1.1" fill="none"/><path d="M8,12 L11,9 H17 L14,12Z M8,15 L11,12 H17 L14,15Z M8,18 L11,15 H17 L14,18Z" stroke="#f0a060" fill="none" stroke-width="1"/></svg>
<svg class="r" style="left:1873px;top:1018px;" width="17" height="14" viewBox="0 0 17 14"><rect x="0.6" y="0.6" width="15.8" height="12" stroke="#e0e0e0" fill="none" stroke-width="1.1"/><path d="M3,10 L7,6 M3,10 V7 M3,10 H6 M14,3 L10,7 M14,3 H11 M14,3 V6" stroke="#e0e0e0" stroke-width="1.1" fill="none"/></svg>
<svg class="r" style="left:1897px;top:1018px;" width="16" height="14" viewBox="0 0 16 14"><path d="M0,1.5 H16 M0,7 H16 M0,12.5 H16" stroke="#eee" stroke-width="2.2"/></svg>
</body></html>
